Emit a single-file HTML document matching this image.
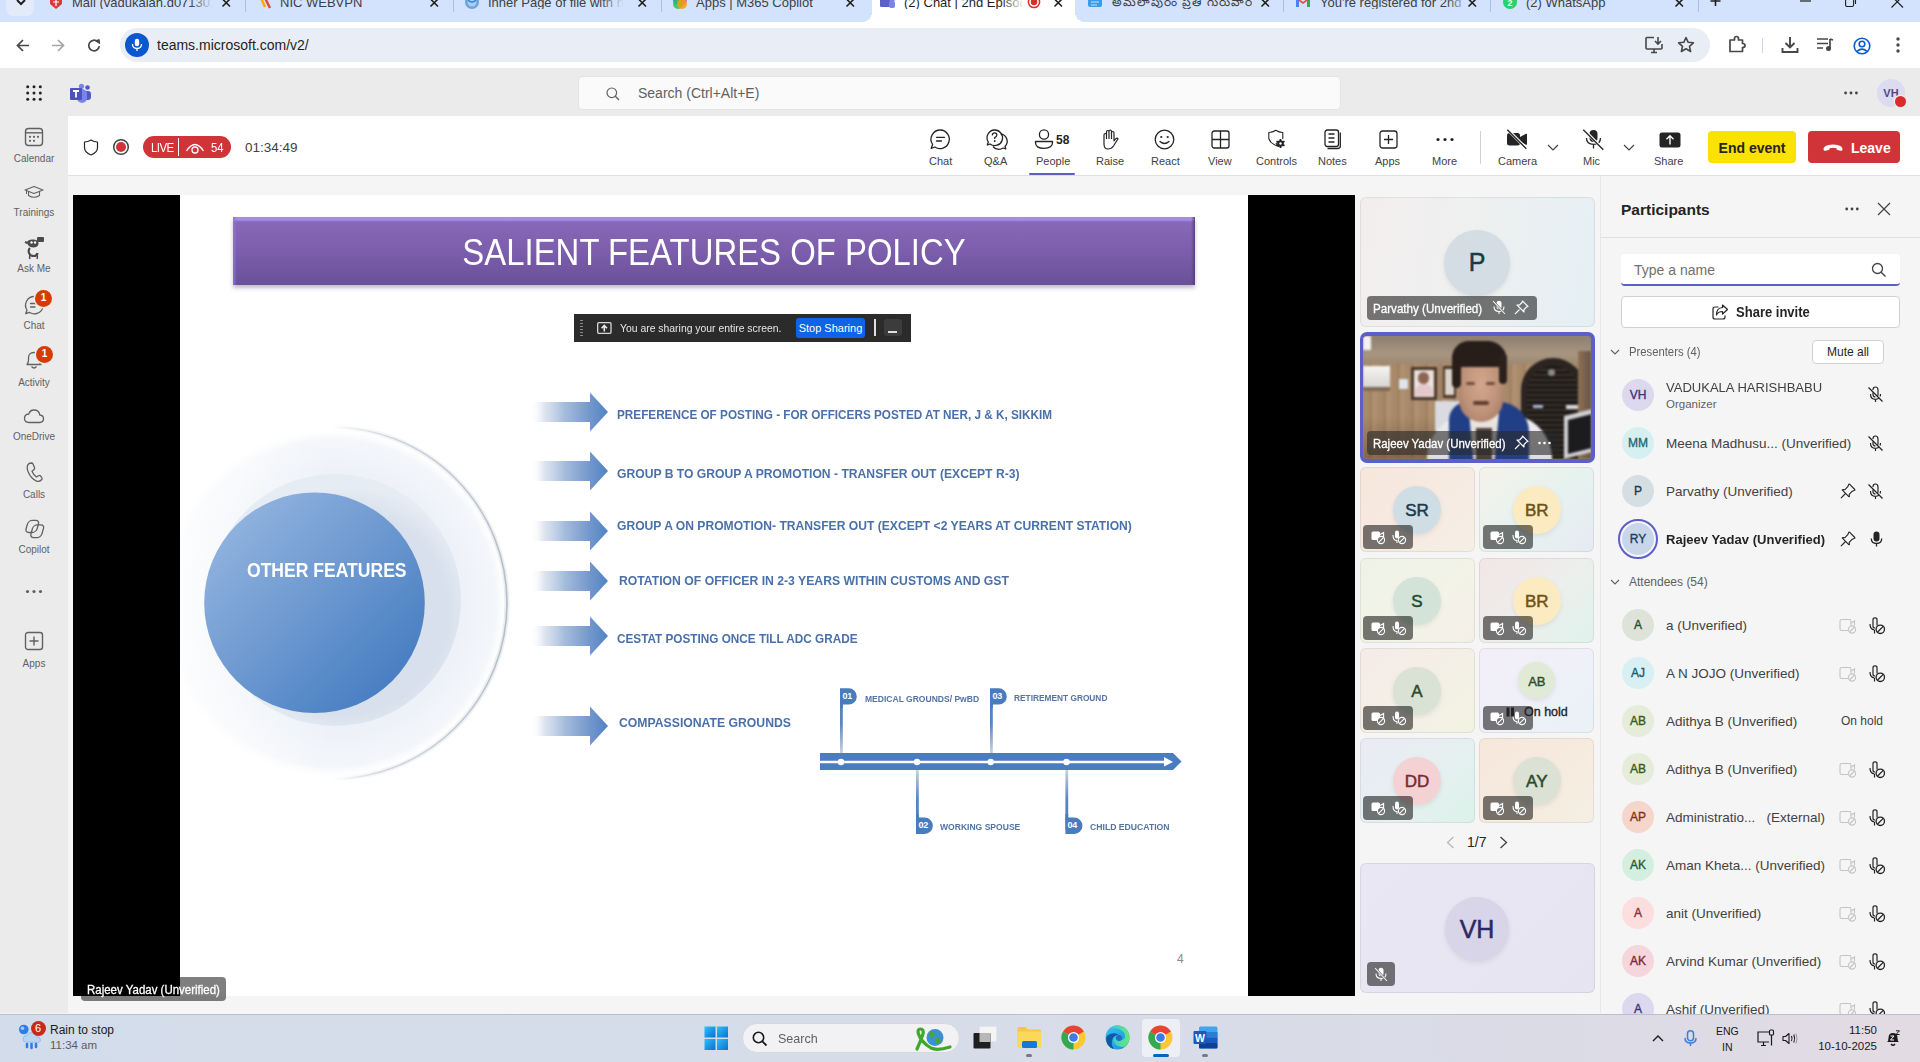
<!DOCTYPE html>
<html><head><meta charset="utf-8">
<style>
*{margin:0;padding:0;box-sizing:border-box}
html,body{width:1920px;height:1062px;overflow:hidden;background:#f5f5f5;font-family:"Liberation Sans",sans-serif;color:#242424}
.a{position:absolute}
.t{position:absolute;white-space:nowrap;line-height:1}
svg{position:absolute;overflow:visible}
/* chrome */
#tabbar{left:0;top:0;width:1920px;height:22px;background:#d3e3fd}
#addr{left:0;top:22px;width:1920px;height:46px;background:#fff}
#omni{left:120px;top:28px;width:1590px;height:34px;border-radius:17px;background:#e9eef6}
#thead{left:0;top:68px;width:1920px;height:48px;background:#ebebeb}
#rail{left:0;top:116px;width:68px;height:897px;background:#ebebeb}
#mtool{left:68px;top:116px;width:1852px;height:60px;background:#fff;border-bottom:1px solid #e0e0e0}
#content{left:68px;top:176px;width:1532px;height:837px;background:#f5f5f5}
#ppanel{left:1600px;top:176px;width:320px;height:837px;background:#f5f5f5;border-left:1px solid #e0e0e0}
#taskbar{left:0;top:1014px;width:1920px;height:48px;background:linear-gradient(90deg,#d3dcea 0%,#d6dde9 50%,#dcdbe6 85%,#e3dbe3 100%);border-top:1px solid #b9c0cc}
.tab{position:absolute;top:0;height:22px}
.tabtxt{position:absolute;top:-4px;font-size:13px;color:#1f1f1f;white-space:nowrap;line-height:13px}
.tx{position:absolute;top:-3px;font-size:14px;color:#1f1f1f;line-height:14px}
.sep{position:absolute;top:0;width:1px;height:12px;background:#a8c0e8}
.slt{font-size:13px;font-weight:bold;color:#4a70aa}
.tln{font-size:9px;font-weight:bold;color:#fff;letter-spacing:-.3px}
.tll{font-size:9.5px;font-weight:bold;color:#5573a3;transform-origin:0 0}
.tile{border-radius:6px;box-shadow:inset 0 0 0 1px rgba(0,0,0,.07)}
.pn{font-size:13.5px;color:#424242}
</style></head><body>
<div id="tabbar" class="a"></div>
<div id="addr" class="a"></div>
<div id="omni" class="a"></div>

<!-- TABS -->
<div class="a" style="left:6px;top:-10px;width:28px;height:26px;border-radius:7px;background:#e3ebfa"></div>
<svg style="left:15px;top:0" width="12" height="6"><path d="M2 0 L6 4 L10 0" stroke="#1f1f1f" stroke-width="2" fill="none"/></svg>
<!-- tab1 -->
<svg style="left:49px;top:-4px" width="14" height="14"><path d="M1 0 H13 V8 L7 13 L1 8 Z" fill="#d93b3b"/><path d="M4 3 h6 M7 3 v7 M4 6h6" stroke="#fff" stroke-width="1.2"/></svg>
<div class="tabtxt" style="left:72px;width:140px;overflow:hidden;color:#3c4043">Mail (vadukalah.d071301(</div>
<div class="a" style="left:190px;top:0;width:24px;height:12px;background:linear-gradient(90deg,rgba(211,227,253,0),#d3e3fd)"></div>
<svg style="left:222px;top:-1px" width="9" height="8"><path d="M0.5 0 L8 7.5 M8 0 L0.5 7.5" stroke="#1f1f1f" stroke-width="1.6"/></svg>
<div class="sep" style="left:245px"></div>
<!-- tab2 -->
<svg style="left:257px;top:-4px" width="16" height="14"><path d="M3 0 L8 11" stroke="#f9ab00" stroke-width="2.5"/><path d="M7 0 L13 12" stroke="#e8453c" stroke-width="2.5"/></svg>
<div class="tabtxt" style="left:280px;color:#3c4043">NIC WEBVPN</div>
<svg style="left:430px;top:-1px" width="9" height="8"><path d="M0.5 0 L8 7.5 M8 0 L0.5 7.5" stroke="#1f1f1f" stroke-width="1.6"/></svg>
<div class="sep" style="left:453px"></div>
<!-- tab3 -->
<svg style="left:464px;top:-6px" width="16" height="16"><circle cx="8" cy="8" r="7" fill="#6ba4e0"/><circle cx="8" cy="8" r="4.5" fill="#a8cdf3"/><path d="M4 6 Q8 10 12 6" stroke="#3a7cc8" stroke-width="1.3" fill="none"/></svg>
<div class="tabtxt" style="left:488px;width:136px;overflow:hidden;color:#3c4043">Inner Page of file with nur</div>
<div class="a" style="left:600px;top:0;width:24px;height:12px;background:linear-gradient(90deg,rgba(211,227,253,0),#d3e3fd)"></div>
<svg style="left:638px;top:-1px" width="9" height="8"><path d="M0.5 0 L8 7.5 M8 0 L0.5 7.5" stroke="#1f1f1f" stroke-width="1.6"/></svg>
<div class="sep" style="left:661px"></div>
<!-- tab4 -->
<svg style="left:672px;top:-6px" width="16" height="16"><circle cx="6" cy="6" r="5" fill="#3b82f6"/><circle cx="10" cy="6" r="5" fill="#e04ad6" opacity=".85"/><circle cx="6" cy="10" r="5" fill="#22c55e" opacity=".85"/><circle cx="10" cy="10" r="5" fill="#f59e0b" opacity=".85"/></svg>
<div class="tabtxt" style="left:696px;color:#3c4043">Apps | M365 Copilot</div>
<svg style="left:846px;top:-1px" width="9" height="8"><path d="M0.5 0 L8 7.5 M8 0 L0.5 7.5" stroke="#1f1f1f" stroke-width="1.6"/></svg>
<!-- active tab -->
<div class="a" style="left:872px;top:-10px;width:203px;height:32px;background:#fff;border-radius:10px 10px 0 0"></div>
<div class="a" style="left:862px;top:12px;width:10px;height:10px;background:radial-gradient(circle at 0 0,#d3e3fd 10px,#fff 10px)"></div>
<div class="a" style="left:1075px;top:12px;width:10px;height:10px;background:radial-gradient(circle at 100% 0,#d3e3fd 10px,#fff 10px)"></div>
<svg style="left:880px;top:-5px" width="16" height="14"><rect x="0" y="3" width="10" height="9" rx="1.5" fill="#5b5fc7"/><circle cx="12" cy="4" r="3" fill="#7b83eb"/><rect x="9" y="6" width="6" height="7" rx="2" fill="#7b83eb"/></svg>
<div class="tabtxt" style="left:904px;width:118px;overflow:hidden">(2) Chat | 2nd Episode</div>
<div class="a" style="left:1002px;top:0;width:22px;height:12px;background:linear-gradient(90deg,rgba(255,255,255,0),#fff)"></div>
<svg style="left:1027px;top:-5px" width="14" height="14"><circle cx="7" cy="7" r="5.6" stroke="#d93025" stroke-width="1.5" fill="none"/><circle cx="7" cy="7" r="3.2" fill="#d93025"/></svg>
<svg style="left:1054px;top:-1px" width="9" height="8"><path d="M0.5 0 L8 7.5 M8 0 L0.5 7.5" stroke="#1f1f1f" stroke-width="1.6"/></svg>
<!-- tab6 -->
<svg style="left:1088px;top:-5px" width="16" height="14"><rect x="0" y="1" width="14" height="11" rx="2" fill="#3c9be8"/><path d="M3 4h8M3 7h8M3 10h6" stroke="#bfe3ff" stroke-width="1.2"/></svg>
<div class="tabtxt" style="left:1112px;width:140px;overflow:hidden;color:#3c4043;font-size:12px;letter-spacing:1px">&#x0C05;&#x0C2E;&#x0C32;&#x0C3E;&#x0C2A;&#x0C41;&#x0C30;&#x0C02; &#x0C2A;&#x0C4D;&#x0C30;&#x0C24;&#x0C3F; &#x0C17;&#x0C41;&#x0C30;&#x0C41;&#x0C35;&#x0C3E;&#x0C30;&#x0C02;</div>
<div class="tabtxt" style="left:1112px;width:142px;overflow:hidden;color:#5f6368;font-size:13px">&#8203;</div>
<svg style="left:1261px;top:-1px" width="9" height="8"><path d="M0.5 0 L8 7.5 M8 0 L0.5 7.5" stroke="#1f1f1f" stroke-width="1.6"/></svg>
<div class="sep" style="left:1283px"></div>
<!-- tab7 -->
<svg style="left:1295px;top:-5px" width="16" height="13"><path d="M1 2 V12 H4 V6 L8 9 L12 6 V12 H15 V2 L8 7 Z" fill="#ea4335"/><path d="M1 2 V12 H4 V6 Z" fill="#4285f4"/><path d="M15 2 V12 H12 V6 Z" fill="#34a853"/></svg>
<div class="tabtxt" style="left:1320px;width:148px;overflow:hidden;color:#3c4043">You're registered for 2nd</div>
<div class="a" style="left:1446px;top:0;width:24px;height:12px;background:linear-gradient(90deg,rgba(211,227,253,0),#d3e3fd)"></div>
<svg style="left:1468px;top:-1px" width="9" height="8"><path d="M0.5 0 L8 7.5 M8 0 L0.5 7.5" stroke="#1f1f1f" stroke-width="1.6"/></svg>
<div class="sep" style="left:1490px"></div>
<!-- tab8 -->
<svg style="left:1502px;top:-6px" width="16" height="16"><circle cx="8" cy="8" r="7" fill="#25d366"/><text x="8" y="11.5" font-size="9" font-family="Liberation Sans" font-weight="bold" fill="#fff" text-anchor="middle">2</text></svg>
<div class="tabtxt" style="left:1526px;color:#3c4043">(2) WhatsApp</div>
<svg style="left:1675px;top:-1px" width="9" height="8"><path d="M0.5 0 L8 7.5 M8 0 L0.5 7.5" stroke="#1f1f1f" stroke-width="1.6"/></svg>
<div class="sep" style="left:1698px"></div>
<svg style="left:1710px;top:-3px" width="12" height="10"><path d="M5.5 0 V9 M0.5 4 H10.5" stroke="#1f1f1f" stroke-width="1.6"/></svg>
<svg style="left:1800px;top:0" width="11" height="3"><path d="M0 1 H11" stroke="#1f1f1f" stroke-width="1.2"/></svg>
<svg style="left:1845px;top:-4px" width="12" height="12"><rect x="0.6" y="2" width="8" height="8.5" rx="1.5" stroke="#1f1f1f" stroke-width="1.1" fill="none"/><path d="M3 0.6 H8.5 Q10.5 .6 10.5 2.6 V8" stroke="#1f1f1f" stroke-width="1.1" fill="none"/></svg>
<svg style="left:1891px;top:-4px" width="13" height="12"><path d="M0.5 0 L12 11.5 M12 0 L0.5 11.5" stroke="#1f1f1f" stroke-width="1.2"/></svg>

<!-- ADDRESS BAR -->
<svg style="left:16px;top:39px" width="14" height="13"><path d="M13 6.5 H2 M7 1 L1.5 6.5 L7 12" stroke="#474747" stroke-width="1.7" fill="none"/></svg>
<svg style="left:51px;top:39px" width="14" height="13"><path d="M1 6.5 H12 M7 1 L12.5 6.5 L7 12" stroke="#a6a6a6" stroke-width="1.7" fill="none"/></svg>
<svg style="left:87px;top:38px" width="15" height="15"><path d="M12.3 8.2 A5.3 5.3 0 1 1 10.6 3.6" stroke="#474747" stroke-width="1.7" fill="none"/><path d="M8.3 2.8 L12.2 1.6 L12.6 5.6 Z" fill="#474747" stroke="#474747" stroke-width="1"/></svg>
<div class="a" style="left:125px;top:33px;width:24px;height:24px;border-radius:12px;background:#0b57d0"></div>
<svg style="left:131px;top:38px" width="12" height="14"><rect x="3.8" y="0.8" width="4.4" height="7.4" rx="2.2" fill="#fff"/><path d="M1.5 6 Q1.5 10.5 6 10.5 Q10.5 10.5 10.5 6 M6 10.5 V13" stroke="#fff" stroke-width="1.3" fill="none"/></svg>
<div class="t" style="left:157px;top:38px;font-size:14px;color:#1f1f1f">teams.microsoft.com/v2/</div>
<svg style="left:1645px;top:36px" width="20" height="18"><path d="M9 1.5 H2 Q1 1.5 1 2.5 V12 Q1 13 2 13 H16 Q17 13 17 12 V8" stroke="#474747" stroke-width="1.6" fill="none"/><path d="M6 16.5 H12 M9 13 V16.5" stroke="#474747" stroke-width="1.6"/><path d="M13 1 V8 M10 5 L13 8 L16 5" stroke="#474747" stroke-width="1.6" fill="none"/></svg>
<svg style="left:1677px;top:36px" width="18" height="18"><path d="M9 1.5 L11.2 6.3 L16.4 6.8 L12.5 10.3 L13.6 15.5 L9 12.8 L4.4 15.5 L5.5 10.3 L1.6 6.8 L6.8 6.3 Z" stroke="#474747" stroke-width="1.6" fill="none" stroke-linejoin="round"/></svg>
<svg style="left:1728px;top:35px" width="19" height="19"><path d="M2 5 H6.5 V3.5 Q6.5 1.5 8.5 1.5 Q10.5 1.5 10.5 3.5 V5 H14.5 V8.5 Q17 8.5 17 10.5 Q17 12.5 14.5 12.5 V16.5 H2 Z" stroke="#474747" stroke-width="1.7" fill="none" stroke-linejoin="round"/></svg>
<div class="a" style="left:1762px;top:38px;width:1px;height:15px;background:#c7d7f0"></div>
<svg style="left:1780px;top:35px" width="20" height="20"><path d="M10 2 V12 M5.5 8 L10 12.5 L14.5 8" stroke="#474747" stroke-width="1.9" fill="none"/><path d="M2.5 13 V17 H17.5 V13" stroke="#474747" stroke-width="1.9" fill="none"/></svg>
<svg style="left:1816px;top:37px" width="20" height="16"><path d="M1 2 H12 M1 6.5 H12 M1 11 H7" stroke="#474747" stroke-width="1.7"/><path d="M14 2 V11" stroke="#474747" stroke-width="1.7"/><circle cx="12.5" cy="11.5" r="2.5" fill="#474747"/><path d="M14 2 L17 3" stroke="#474747" stroke-width="1.7"/></svg>
<svg style="left:1853px;top:37px" width="18" height="18"><circle cx="9" cy="9" r="7.8" stroke="#0b57d0" stroke-width="1.6" fill="none"/><circle cx="9" cy="7" r="2.8" stroke="#0b57d0" stroke-width="1.6" fill="none"/><path d="M4 14.3 Q9 10 14 14.3" stroke="#0b57d0" stroke-width="1.6" fill="none"/></svg>
<svg style="left:1896px;top:37px" width="4" height="16"><circle cx="2" cy="2" r="1.7" fill="#474747"/><circle cx="2" cy="8" r="1.7" fill="#474747"/><circle cx="2" cy="14" r="1.7" fill="#474747"/></svg>

<div id="thead" class="a"></div>
<div id="rail" class="a"></div>
<div id="mtool" class="a"></div>

<!-- TEAMS HEADER -->
<svg style="left:26px;top:85px" width="16" height="16"><g fill="#242424"><circle cx="1.7" cy="1.7" r="1.5"/><circle cx="8" cy="1.7" r="1.5"/><circle cx="14.3" cy="1.7" r="1.5"/><circle cx="1.7" cy="8" r="1.5"/><circle cx="8" cy="8" r="1.5"/><circle cx="14.3" cy="8" r="1.5"/><circle cx="1.7" cy="14.3" r="1.5"/><circle cx="8" cy="14.3" r="1.5"/><circle cx="14.3" cy="14.3" r="1.5"/></g></svg>
<svg style="left:69px;top:83px" width="23" height="21"><circle cx="12.5" cy="3.3" r="2.6" fill="#7b83eb"/><circle cx="18.5" cy="4.5" r="2.3" fill="#5059c9"/><rect x="14.5" y="8" width="7.5" height="9" rx="3" fill="#5059c9"/><rect x="8" y="6" width="10" height="14" rx="5" fill="#7b83eb"/><rect x="1" y="5" width="12" height="12" rx="1" fill="#4b53bc"/><path d="M4 8 H10 M7 8 V14.5" stroke="#fff" stroke-width="1.8"/></svg>
<div class="a" style="left:579px;top:77px;width:761px;height:32px;border-radius:4px;background:#fafafa;box-shadow:0 0 0 1px #e3e3e3"></div>
<svg style="left:606px;top:87px" width="14" height="14"><circle cx="5.8" cy="5.8" r="4.8" stroke="#616161" stroke-width="1.2" fill="none"/><path d="M9.3 9.3 L13 13" stroke="#616161" stroke-width="1.3"/></svg>
<div class="t" style="left:638px;top:86px;font-size:14px;color:#616161">Search (Ctrl+Alt+E)</div>
<svg style="left:1844px;top:91px" width="14" height="4"><g fill="#424242"><circle cx="1.6" cy="2" r="1.4"/><circle cx="7" cy="2" r="1.4"/><circle cx="12.4" cy="2" r="1.4"/></g></svg>
<div class="a" style="left:1877px;top:79px;width:28px;height:28px;border-radius:14px;background:#dcdbf0"></div>
<div class="t" style="left:1877px;top:88px;width:28px;text-align:center;font-size:11px;font-weight:bold;color:#4f4a7a">VH</div>
<div class="a" style="left:1895px;top:96px;width:11px;height:11px;border-radius:6px;background:#d92c2c;box-shadow:0 0 0 1.5px #ebebeb"></div>

<!-- MEETING TOOLBAR -->
<svg style="left:83px;top:139px" width="16" height="17"><path d="M8 1 Q11 3 14.5 3 V8.5 Q14.5 13.5 8 16 Q1.5 13.5 1.5 8.5 V3 Q5 3 8 1 Z" stroke="#242424" stroke-width="1.2" fill="none" stroke-linejoin="round"/></svg>
<svg style="left:112px;top:138px" width="18" height="18"><circle cx="9" cy="9" r="7.3" stroke="#424242" stroke-width="1.5" fill="none"/><circle cx="9" cy="9" r="5" fill="#d13438"/></svg>
<div class="a" style="left:143px;top:136px;width:88px;height:22px;border-radius:11px;background:#d13438"></div>
<div class="t" style="left:151px;top:142px;font-size:12.5px;color:#fff;letter-spacing:-0.6px;transform:scaleX(.92);transform-origin:0 0">LIVE</div>
<div class="a" style="left:178px;top:138px;width:1px;height:18px;background:#fff"></div>
<svg style="left:185px;top:141px" width="20" height="14"><path d="M1.5 10 Q10 -3 18.5 10" stroke="#fff" stroke-width="1.3" fill="none"/><circle cx="10" cy="9" r="3" stroke="#fff" stroke-width="1.3" fill="none"/></svg>
<div class="t" style="left:211px;top:142px;font-size:12.5px;color:#fff;transform:scaleX(.9);transform-origin:0 0">54</div>
<div class="t" style="left:245px;top:141px;font-size:13.5px;color:#424242">01:34:49</div>

<!-- toolbar buttons -->
<svg style="left:930px;top:129px" width="21" height="21"><path d="M10.5 1 A9.3 9.3 0 1 1 4.8 18 L1.2 19.5 L2.6 15.5 A9.3 9.3 0 0 1 10.5 1 Z" stroke="#242424" stroke-width="1.3" fill="none" stroke-linejoin="round"/><path d="M6.5 8.3 H14.5 M6.5 12 H11.5" stroke="#242424" stroke-width="1.3" stroke-linecap="round"/></svg>
<svg style="left:986px;top:129px" width="22" height="21"><path d="M8.5 1 A7.8 7.8 0 1 1 4 15 L1.3 16 L2.3 13 A7.8 7.8 0 0 1 8.5 1 Z" stroke="#242424" stroke-width="1.3" fill="none" stroke-linejoin="round"/><path d="M14.5 4.8 A7.5 7.5 0 0 1 19 17.5 L19.8 20 L17 19 A7.5 7.5 0 0 1 7 17.5" stroke="#242424" stroke-width="1.3" fill="none" stroke-linejoin="round"/><path d="M6.2 6.4 Q6.4 3.8 8.6 3.8 Q10.9 3.8 10.9 6 Q10.9 7.6 8.7 8.6 V10" stroke="#242424" stroke-width="1.2" fill="none"/><circle cx="8.7" cy="12" r=".9" fill="#242424"/></svg>
<svg style="left:1034px;top:129px" width="20" height="21"><circle cx="10" cy="5.5" r="4.6" stroke="#242424" stroke-width="1.3" fill="none"/><path d="M1.5 12.5 H18.5 V13.5 Q18.5 19.3 10 19.3 Q1.5 19.3 1.5 13.5 Z" stroke="#242424" stroke-width="1.3" fill="none" stroke-linejoin="round"/></svg>
<div class="t" style="left:1056px;top:134px;font-size:12px;font-weight:bold;color:#242424">58</div>
<svg style="left:1100px;top:129px" width="19" height="21"><path d="M4 15 V6 Q4 4.5 5.3 4.5 Q6.5 4.5 6.5 6 V10 M6.5 10 V3 Q6.5 1.5 7.8 1.5 Q9 1.5 9 3 V10 M9 10 V2.5 Q9 1 10.3 1 Q11.5 1 11.5 2.5 V10 M11.5 10 V4 Q11.5 2.5 12.8 2.5 Q14 2.5 14 4 V12 L16 9.5 Q17.3 8.5 18 9.8 L13.5 17 Q11.5 20 8 20 Q4 20 4 15" stroke="#242424" stroke-width="1.2" fill="none" stroke-linejoin="round"/></svg>
<svg style="left:1154px;top:129px" width="21" height="21"><circle cx="10.5" cy="10.5" r="9.3" stroke="#242424" stroke-width="1.3" fill="none"/><circle cx="7.3" cy="8" r="1.1" fill="#242424"/><circle cx="13.7" cy="8" r="1.1" fill="#242424"/><path d="M6 12.5 Q10.5 16.5 15 12.5" stroke="#242424" stroke-width="1.3" fill="none" stroke-linecap="round"/></svg>
<svg style="left:1211px;top:130px" width="19" height="19"><rect x="1" y="1" width="17" height="17" rx="2.2" stroke="#242424" stroke-width="1.3" fill="none"/><path d="M9.5 1 V18 M1 9.5 H18" stroke="#242424" stroke-width="1.3"/></svg>
<svg style="left:1267px;top:129px" width="20" height="20"><path d="M9 13.8 Q9.8 16.5 12 17.5 Q3.5 15 1.8 9.5 V3.5 Q6 3.2 8.8 1.2 Q11.6 3.2 15.8 3.5 V10" stroke="#242424" stroke-width="1.1" fill="none" stroke-linejoin="round"/><circle cx="13.5" cy="14.5" r="3.3" fill="#242424"/><g stroke="#242424" stroke-width="1.8"><path d="M13.5 10 V19 M9.5 12.2 L17.5 16.8 M9.5 16.8 L17.5 12.2"/></g><circle cx="13.5" cy="14.5" r="1.2" fill="#fff"/></svg>
<svg style="left:1324px;top:129px" width="19" height="21"><rect x="1" y="1" width="13.5" height="16.5" rx="2.2" stroke="#242424" stroke-width="1.3" fill="none"/><path d="M4.5 5 H10.5 M4.5 9 H10.5 M4.5 13 H10.5" stroke="#242424" stroke-width="1.3"/><path d="M16.3 3.5 V17 Q16.3 19.5 13.8 19.5 H3.5" stroke="#242424" stroke-width="1.3" fill="none"/></svg>
<svg style="left:1379px;top:130px" width="19" height="19"><rect x="1" y="1" width="17" height="17" rx="2.5" stroke="#242424" stroke-width="1.3" fill="none"/><path d="M9.5 5 V14 M5 9.5 H14" stroke="#242424" stroke-width="1.3"/></svg>
<svg style="left:1436px;top:137px" width="18" height="5"><g fill="#242424"><circle cx="2" cy="2.5" r="1.6"/><circle cx="9" cy="2.5" r="1.6"/><circle cx="16" cy="2.5" r="1.6"/></g></svg>
<div class="a" style="left:1480px;top:131px;width:1px;height:33px;background:#d1d1d1"></div>
<svg style="left:1506px;top:129px" width="23" height="21"><rect x="1" y="4" width="13" height="12.5" rx="2.5" fill="#242424"/><path d="M14 8 L20 4.8 Q21 4.3 21 5.5 V15 Q21 16.2 20 15.7 L14 12.5 Z" fill="#242424"/><path d="M1.5 0.5 L20.5 19.5" stroke="#fff" stroke-width="3"/><path d="M1.3 0.8 L20.3 19.8" stroke="#242424" stroke-width="1.3"/></svg>
<svg style="left:1547px;top:144px" width="12" height="7"><path d="M1 1 L6 6 L11 1" stroke="#424242" stroke-width="1.2" fill="none"/></svg>
<svg style="left:1582px;top:129px" width="23" height="21"><rect x="7.5" y="1" width="8" height="12" rx="4" fill="#242424"/><path d="M4.5 9 Q4.5 15.3 11.5 15.3 Q18.5 15.3 18.5 9 M11.5 15.3 V19.5" stroke="#242424" stroke-width="1.3" fill="none"/><path d="M1.5 0.5 L21.5 20.5" stroke="#fff" stroke-width="3"/><path d="M1.3 0.8 L21.3 20.8" stroke="#242424" stroke-width="1.3"/></svg>
<svg style="left:1623px;top:144px" width="12" height="7"><path d="M1 1 L6 6 L11 1" stroke="#424242" stroke-width="1.2" fill="none"/></svg>
<svg style="left:1659px;top:132px" width="22" height="16"><rect x="0.5" y="0.5" width="21" height="15" rx="2.5" fill="#242424"/><path d="M11 12.5 V4 M7.5 7.3 L11 3.8 L14.5 7.3" stroke="#fff" stroke-width="1.4" fill="none"/></svg>
<div class="t" style="left:929px;top:156px;font-size:11px;color:#424242">Chat</div>
<div class="t" style="left:984px;top:156px;font-size:11px;color:#424242">Q&amp;A</div>
<div class="t" style="left:1036px;top:156px;font-size:11px;color:#424242">People</div>
<div class="t" style="left:1096px;top:156px;font-size:11px;color:#424242">Raise</div>
<div class="t" style="left:1151px;top:156px;font-size:11px;color:#424242">React</div>
<div class="t" style="left:1208px;top:156px;font-size:11px;color:#424242">View</div>
<div class="t" style="left:1256px;top:156px;font-size:11px;color:#424242">Controls</div>
<div class="t" style="left:1318px;top:156px;font-size:11px;color:#424242">Notes</div>
<div class="t" style="left:1375px;top:156px;font-size:11px;color:#424242">Apps</div>
<div class="t" style="left:1432px;top:156px;font-size:11px;color:#424242">More</div>
<div class="t" style="left:1498px;top:156px;font-size:11px;color:#424242">Camera</div>
<div class="t" style="left:1583px;top:156px;font-size:11px;color:#424242">Mic</div>
<div class="t" style="left:1654px;top:156px;font-size:11px;color:#424242">Share</div>
<div class="a" style="left:1029px;top:173px;width:46px;height:2px;background:#5b5fc7;border-radius:1px"></div>
<div class="a" style="left:1708px;top:131px;width:88px;height:32px;border-radius:4px;background:#fbe202"></div>
<div class="t" style="left:1708px;top:141px;width:88px;text-align:center;font-size:14px;font-weight:bold;color:#242424">End event</div>
<div class="a" style="left:1808px;top:131px;width:92px;height:32px;border-radius:4px;background:#d13438"></div>
<svg style="left:1822px;top:142px" width="22" height="10"><path d="M1.5 7.5 Q1 3 11 2.5 Q21 3 20.5 7.5 Q20.3 9 18.5 8.7 L15.5 8 Q14.3 7.6 14.5 6.2 Q11 5.2 7.5 6.2 Q7.7 7.6 6.5 8 L3.5 8.7 Q1.7 9 1.5 7.5 Z" fill="#fff"/></svg>
<div class="t" style="left:1851px;top:141px;font-size:14px;font-weight:bold;color:#fff">Leave</div>


<!-- RAIL -->
<svg style="left:24px;top:127px" width="20" height="20"><rect x="1.5" y="1.5" width="17" height="17" rx="3" stroke="#616161" stroke-width="1.4" fill="none"/><path d="M1.5 5.8 H18.5" stroke="#616161" stroke-width="1.4"/><g fill="#616161"><circle cx="6" cy="9.8" r="1.1"/><circle cx="10" cy="9.8" r="1.1"/><circle cx="14" cy="9.8" r="1.1"/><circle cx="6" cy="13.8" r="1.1"/><circle cx="10" cy="13.8" r="1.1"/></g></svg>
<div class="t" style="left:0;top:154px;width:68px;text-align:center;font-size:10px;color:#616161">Calendar</div>
<svg style="left:24px;top:185px" width="20" height="14"><path d="M1 5 L10 1.5 L19 5 L10 8.5 Z" stroke="#616161" stroke-width="1.1" fill="none" stroke-linejoin="round"/><path d="M4.5 6.5 V10.5 Q10 14 15.5 10.5 V6.5" stroke="#616161" stroke-width="1.1" fill="none"/><path d="M2.5 5.5 V9" stroke="#616161" stroke-width="1"/></svg>
<div class="t" style="left:0;top:208px;width:68px;text-align:center;font-size:10px;color:#616161">Trainings</div>
<svg style="left:22px;top:236px" width="24" height="24"><path d="M5 7 Q5 3 12 3.5 Q17 4 16.5 8 Q16 11 12 11.5 Q6.5 11.5 5 7 Z" fill="#4a4a4a"/><rect x="15" y="1" width="7" height="5" rx="1" fill="#4a4a4a"/><path d="M3 6 L5.5 7" stroke="#4a4a4a" stroke-width="2"/><circle cx="9.5" cy="6.5" r="1.2" fill="#fff"/><circle cx="13" cy="6.5" r="1.2" fill="#fff"/><path d="M8 12 Q6 14 7 17 Q8 20 12 20 Q15 20 15.5 17" stroke="#4a4a4a" stroke-width="2.2" fill="none"/><path d="M8.5 18 Q7 21 8 23 M14.5 18 Q16 21 15 23" stroke="#4a4a4a" stroke-width="1.5" fill="none"/></svg>
<div class="t" style="left:0;top:264px;width:68px;text-align:center;font-size:10px;color:#616161">Ask Me</div>
<svg style="left:24px;top:295px" width="21" height="21"><path d="M10.5 1.5 A8.7 8.7 0 1 1 5.4 17.3 L1.7 18.7 L3 15 A8.7 8.7 0 0 1 10.5 1.5 Z" stroke="#616161" stroke-width="1.3" fill="none" stroke-linejoin="round"/><path d="M6.5 8.5 H13.5 M6.5 12 H11" stroke="#616161" stroke-width="1.3" stroke-linecap="round"/></svg>
<div class="a" style="left:35px;top:290px;width:17px;height:17px;border-radius:9px;background:#d83b01;box-shadow:0 0 0 1.5px #ebebeb"></div>
<div class="t" style="left:35px;top:293px;width:17px;text-align:center;font-size:10px;font-weight:bold;color:#fff">1</div>
<div class="t" style="left:0;top:321px;width:68px;text-align:center;font-size:10px;color:#616161">Chat</div>
<svg style="left:24px;top:350px" width="20" height="21"><path d="M3 14.5 Q4.5 13 4.5 10 V8 Q4.5 2.5 10 2.5 Q15.5 2.5 15.5 8 V10 Q15.5 13 17 14.5 Z" stroke="#616161" stroke-width="1.3" fill="none" stroke-linejoin="round"/><path d="M7.5 16.5 Q10 19.5 12.5 16.5" stroke="#616161" stroke-width="1.3" fill="none"/></svg>
<div class="a" style="left:36px;top:346px;width:17px;height:17px;border-radius:9px;background:#d83b01;box-shadow:0 0 0 1.5px #ebebeb"></div>
<div class="t" style="left:36px;top:349px;width:17px;text-align:center;font-size:10px;font-weight:bold;color:#fff">1</div>
<div class="t" style="left:0;top:378px;width:68px;text-align:center;font-size:10px;color:#616161">Activity</div>
<svg style="left:23px;top:408px" width="22" height="16"><path d="M6 14.5 H16.5 Q20.5 14.5 20.5 10.8 Q20.5 7.3 16.8 7 Q16 2 11 2 Q7 2 5.8 6 Q1.5 6.3 1.5 10.3 Q1.5 14.5 6 14.5 Z" stroke="#616161" stroke-width="1.3" fill="none"/></svg>
<div class="t" style="left:0;top:432px;width:68px;text-align:center;font-size:10px;color:#616161">OneDrive</div>
<svg style="left:25px;top:462px" width="18" height="21"><path d="M4 1.5 L6.5 1 Q7.5 1 8 2 L9.5 5.5 Q10 6.8 8.8 7.8 L7 9.2 Q8.5 13 11.5 15 L13.5 13.7 Q14.5 13 15.5 13.8 L17 16 Q17.5 17 16.5 17.8 Q14.5 20 12 19.3 Q6 17 3 9.5 Q1 4 4 1.5 Z" stroke="#616161" stroke-width="1.3" fill="none" stroke-linejoin="round"/></svg>
<div class="t" style="left:0;top:490px;width:68px;text-align:center;font-size:10px;color:#616161">Calls</div>
<svg style="left:23px;top:518px" width="22" height="22"><g stroke="#616161" stroke-width="1.35" fill="none"><rect x="3.8" y="2.3" width="11" height="12.2" rx="3.8" transform="skewX(-16) translate(2.4 0)"/><rect x="8.8" y="6.8" width="11" height="12.8" rx="3.8" transform="skewX(-16) translate(3.7 0)"/></g></svg>
<div class="t" style="left:0;top:545px;width:68px;text-align:center;font-size:10px;color:#616161">Copilot</div>
<svg style="left:25px;top:589px" width="18" height="5"><g fill="#616161"><circle cx="2.5" cy="2.5" r="1.6"/><circle cx="9" cy="2.5" r="1.6"/><circle cx="15.5" cy="2.5" r="1.6"/></g></svg>
<svg style="left:24px;top:631px" width="20" height="20"><rect x="1.5" y="1.5" width="17" height="17" rx="2.5" stroke="#616161" stroke-width="1.4" fill="none"/><path d="M10 5.5 V14.5 M5.5 10 H14.5" stroke="#616161" stroke-width="1.4"/></svg>
<div class="t" style="left:0;top:659px;width:68px;text-align:center;font-size:10px;color:#616161">Apps</div>

<div id="content" class="a"></div>
<div id="ppanel" class="a"></div>

<!-- STAGE -->
<div class="a" style="left:73px;top:195px;width:1282px;height:801px;background:#000"></div>
<div class="a" style="left:180px;top:195px;width:1068px;height:801px;background:#fff;overflow:hidden">
 <div class="a" style="left:53px;top:22px;width:962px;height:68px;background:linear-gradient(180deg,#a58ee0 0,#a58ee0 3px,#8868b8 5px,#7d5fae 45%,#6a5099 100%);box-shadow:0 3px 4px rgba(80,60,120,.35)"></div>
 <div class="a" style="left:53px;top:22px;width:4px;height:68px;background:linear-gradient(90deg,rgba(140,120,210,.9),rgba(120,95,180,0))"></div>
 <div class="a" style="left:1011px;top:22px;width:4px;height:68px;background:linear-gradient(90deg,rgba(100,75,150,0),rgba(85,60,130,.9))"></div>
 <div class="t" id="title" style="left:0;top:39px;width:1068px;text-align:center;font-size:37px;color:#fff;transform:scaleX(.889)">SALIENT FEATURES OF POLICY</div>
</div>

<svg style="left:180px;top:195px;overflow:hidden" width="1068" height="801" viewBox="180 195 1068 801">
<defs>
 <linearGradient id="ag" gradientUnits="userSpaceOnUse" x1="530" y1="0" x2="608" y2="0">
  <stop offset="0" stop-color="#ffffff" stop-opacity="0"/>
  <stop offset="0.18" stop-color="#d6dfec" stop-opacity=".8"/>
  <stop offset="0.45" stop-color="#a4bbdc"/>
  <stop offset="0.75" stop-color="#7699cc"/>
  <stop offset="1" stop-color="#4f82c4"/>
 </linearGradient>
 <linearGradient id="bc" x1="0" y1="0" x2="1" y2="1">
  <stop offset="0" stop-color="#9dbbe3"/>
  <stop offset="0.5" stop-color="#6c98d0"/>
  <stop offset="1" stop-color="#3a74bd"/>
 </linearGradient>
 <radialGradient id="halo" cx="0.55" cy="0.55" r="0.5">
  <stop offset="0.8" stop-color="#d7e0ec"/>
  <stop offset="1" stop-color="#e6ecf4"/>
 </radialGradient>
 <radialGradient id="discr" cx="0.5" cy="0.5" r="0.5">
  <stop offset="0" stop-color="#eaf0f7"/>
  <stop offset="0.75" stop-color="#eef2f8"/>
  <stop offset="0.93" stop-color="#f4f6fa"/>
  <stop offset="1" stop-color="#ffffff" stop-opacity="0"/>
 </radialGradient>
 <linearGradient id="discw" gradientUnits="userSpaceOnUse" x1="157" y1="0" x2="330" y2="0">
  <stop offset="0" stop-color="#ffffff" stop-opacity=".9"/>
  <stop offset="1" stop-color="#ffffff" stop-opacity="0"/>
 </linearGradient>
 <linearGradient id="discl" gradientUnits="userSpaceOnUse" x1="175" y1="0" x2="497" y2="0">
  <stop offset="0" stop-color="#f3f6fa" stop-opacity="0"/>
  <stop offset="0.25" stop-color="#eff3f8" stop-opacity=".9"/>
  <stop offset="1" stop-color="#f2f5f9"/>
 </linearGradient>
 <linearGradient id="arcg" gradientUnits="userSpaceOnUse" x1="331" y1="0" x2="508" y2="0">
  <stop offset="0" stop-color="#c8d0d9" stop-opacity="0"/>
  <stop offset="0.3" stop-color="#c8d0d9" stop-opacity=".8"/>
  <stop offset="1" stop-color="#b4bec9"/>
 </linearGradient>
 <linearGradient id="stemU" x1="0" y1="0" x2="0" y2="1"><stop offset="0" stop-color="#4f7fc0"/><stop offset="1" stop-color="#4f7fc0" stop-opacity=".25"/></linearGradient>
 <linearGradient id="stemD" x1="0" y1="0" x2="0" y2="1"><stop offset="0" stop-color="#4f7fc0" stop-opacity=".35"/><stop offset="1" stop-color="#4f7fc0"/></linearGradient>
</defs>
<circle cx="333" cy="603" r="176" fill="url(#discr)"/><circle cx="333" cy="603" r="176" fill="url(#discw)"/>
<path d="M331 427 A176 176 0 0 1 331 779" stroke="url(#arcg)" stroke-width="5" fill="none" opacity=".25"/><path d="M331 427 A176 176 0 0 1 331 779" stroke="url(#arcg)" stroke-width="1.6" fill="none"/>
<circle cx="335" cy="600" r="126" fill="url(#halo)"/>
<circle cx="314.5" cy="602.8" r="110.3" fill="url(#bc)"/>
<path d="M530 402 H590 V392.5 L608 412 L590 431.5 V422 H530 Z" fill="url(#ag)"/>
<path d="M530 461 H590 V451.5 L608 471 L590 490.5 V481 H530 Z" fill="url(#ag)"/>
<path d="M530 521 H590 V511.5 L608 531 L590 550.5 V541 H530 Z" fill="url(#ag)"/>
<path d="M530 571 H590 V561.5 L608 581 L590 600.5 V591 H530 Z" fill="url(#ag)"/>
<path d="M530 626 H590 V616.5 L608 636 L590 655.5 V646 H530 Z" fill="url(#ag)"/>
<path d="M530 716 H590 V706.5 L608 726 L590 745.5 V736 H530 Z" fill="url(#ag)"/>
</svg>
<div class="t slt" style="left:617px;top:408px;transform:scaleX(0.903);transform-origin:0 0">PREFERENCE OF POSTING - FOR OFFICERS POSTED AT NER, J &amp; K, SIKKIM</div>
<div class="t slt" style="left:617px;top:467px;transform:scaleX(0.934);transform-origin:0 0">GROUP B TO GROUP A PROMOTION - TRANSFER OUT (EXCEPT R-3)</div>
<div class="t slt" style="left:617px;top:519px;transform:scaleX(0.932);transform-origin:0 0">GROUP A ON PROMOTION- TRANSFER OUT (EXCEPT &lt;2 YEARS AT CURRENT STATION)</div>
<div class="t slt" style="left:619px;top:573.5px;transform:scaleX(0.939);transform-origin:0 0">ROTATION OF OFFICER IN 2-3 YEARS WITHIN CUSTOMS AND GST</div>
<div class="t slt" style="left:617px;top:631.5px;transform:scaleX(0.904);transform-origin:0 0">CESTAT POSTING ONCE TILL ADC GRADE</div>
<div class="t slt" style="left:619px;top:716px;transform:scaleX(0.94);transform-origin:0 0">COMPASSIONATE GROUNDS</div>
<div class="t" id="oth" style="left:247px;top:561px;font-size:19.5px;font-weight:bold;color:#fff;transform:scaleX(.9);transform-origin:0 0">OTHER FEATURES</div>

<svg style="left:810px;top:680px" width="380" height="160" viewBox="810 680 380 160">
<defs>
 <linearGradient id="su" gradientUnits="userSpaceOnUse" x1="0" y1="688" x2="0" y2="753"><stop offset="0" stop-color="#4a7bbd"/><stop offset=".55" stop-color="#5a86c2"/><stop offset="1" stop-color="#c9d3de"/></linearGradient>
 <linearGradient id="sd" gradientUnits="userSpaceOnUse" x1="0" y1="770" x2="0" y2="834"><stop offset="0" stop-color="#c9d3de"/><stop offset=".45" stop-color="#5a86c2"/><stop offset="1" stop-color="#4a7bbd"/></linearGradient>
</defs>
<path d="M820 753 H1173 L1181.5 761.5 L1173 770 H820 Z" fill="#4a7cc0"/>
<path d="M820 762 H1166" stroke="#fff" stroke-width="2.4"/>
<path d="M1164 757 L1173 762 L1164 766.5 Z" fill="#fff"/>
<g fill="#fff"><circle cx="841" cy="762" r="3.2"/><circle cx="917" cy="762" r="3.2"/><circle cx="990.7" cy="762" r="3.2"/><circle cx="1066.5" cy="762" r="3.2"/></g>
<rect x="840" y="690" width="2.8" height="63" fill="url(#su)"/>
<rect x="990" y="690" width="2.8" height="63" fill="url(#su)"/>
<rect x="916" y="770" width="2.8" height="60" fill="url(#sd)"/>
<rect x="1065.4" y="770" width="2.8" height="60" fill="url(#sd)"/>
<path d="M840 688.3 H848.7 A8.1 8.1 0 0 1 848.7 704.5 H842.8 V708 H840 Z" fill="#4a7bbd"/>
<path d="M990 688.3 H998.7 A8.1 8.1 0 0 1 998.7 704.5 H992.8 V708 H990 Z" fill="#4a7bbd"/>
<path d="M916 814 H918.8 V817.5 H924.6 A8.2 8.2 0 0 1 924.6 834 H916 Z" fill="#4a7bbd"/>
<path d="M1065.4 814 H1068.2 V817.5 H1074.2 A8.2 8.2 0 0 1 1074.2 834 H1065.4 Z" fill="#4a7bbd"/>
</svg>
<div class="t tln" style="left:842.5px;top:692px">01</div>
<div class="t tln" style="left:992.5px;top:692px">03</div>
<div class="t tln" style="left:918.5px;top:821px">02</div>
<div class="t tln" style="left:1067.5px;top:821px">04</div>
<div class="t tll" style="left:864.5px;top:694px;transform:scaleX(.898)">MEDICAL GROUNDS/ PwBD</div>
<div class="t tll" style="left:1013.5px;top:693px;transform:scaleX(.876)">RETIREMENT GROUND</div>
<div class="t tll" style="left:940px;top:821.5px;transform:scaleX(.9)">WORKING SPOUSE</div>
<div class="t tll" style="left:1089.5px;top:821.5px;transform:scaleX(.91)">CHILD EDUCATION</div>
<div class="t" style="left:1177px;top:953px;font-size:12px;color:#8a8a8a">4</div>

<!-- GALLERY -->
<div class="a" style="left:1600px;top:176px;width:1px;height:837px;background:#e6e6e6"></div>
<div class="a tile" style="left:1359.5px;top:197px;width:235px;height:130px;background:linear-gradient(100deg,#f3eeee 0%,#eef0f0 50%,#e4eff4 100%)"></div>
<div class="a" style="left:1444px;top:230px;width:66px;height:66px;border-radius:33px;background:#d3dde3;box-shadow:0 2px 5px rgba(0,0,0,.08)"></div>
<div class="t" style="left:1444px;top:250px;width:66px;text-align:center;font-size:25px;color:#1c3a46;-webkit-text-stroke:.5px #1c3a46">P</div>
<div class="a" style="left:1367px;top:296px;width:170px;height:24px;border-radius:4px;background:rgba(0,0,0,.52)"></div>
<div class="t" style="left:1373px;top:303px;font-size:12.5px;color:#fff;-webkit-text-stroke:.3px #fff;transform:scaleX(.93);transform-origin:0 0">Parvathy (Unverified)</div>
<svg style="left:1492px;top:300px" width="14" height="15"><rect x="4.5" y="0.8" width="5" height="8.5" rx="2.5" fill="#fff"/><path d="M2 6.5 Q2 11.5 7 11.5 Q12 11.5 12 6.5 M7 11.5 V14" stroke="#fff" stroke-width="1.1" fill="none"/><path d="M1 1 L13 14" stroke="#6a6a6a" stroke-width="2.2"/><path d="M1 1 L13 14" stroke="#fff" stroke-width="1.1"/></svg>
<svg style="left:1514px;top:300px" width="15" height="15"><path d="M8.5 1 L14 6.5 L12.5 7 L10 9.5 L10 12 L3 5 L5.5 5 L8 2.5 Z" stroke="#fff" stroke-width="1.1" fill="none" stroke-linejoin="round"/><path d="M5.5 9.5 L1 14" stroke="#fff" stroke-width="1.1"/></svg>

<!-- video tile -->
<div class="a" style="left:1359.5px;top:332px;width:235.5px;height:131px;border-radius:7px;background:#5b5fc7"></div>
<div class="a" style="left:1363px;top:336px;width:228px;height:123px;border-radius:4px;overflow:hidden;background:#a08266"><div class="a" style="left:0;top:0;width:228px;height:123px;filter:blur(1.3px)">
 <div class="a" style="left:0;top:0;width:228px;height:30px;background:linear-gradient(180deg,#8c7f70 0%,#a89680 60%,#9c8670 100%)"></div>
 <div class="a" style="left:0;top:28px;width:228px;height:95px;background:repeating-linear-gradient(90deg,#a88a6b 0 6px,#9f8163 6px 9px,#b09070 9px 14px)"></div>
 <div class="a" style="left:0;top:80px;width:228px;height:43px;background:linear-gradient(180deg,rgba(120,90,60,0),rgba(90,65,45,.5))"></div>
 <div class="a" style="left:0;top:0;width:8px;height:14px;background:#f2f2f2"></div>
 <div class="a" style="left:0;top:30px;width:27px;height:21px;background:linear-gradient(180deg,#f4f4f4,#d9d6d2)"></div>
 <div class="a" style="left:0;top:51px;width:27px;height:4px;background:#7d6a58"></div>
 <div class="a" style="left:36px;top:43px;width:9px;height:10px;background:#e2e4ec"></div>
 <div class="a" style="left:48px;top:31px;width:26px;height:33px;background:#4a3526"></div>
 <div class="a" style="left:51px;top:34px;width:20px;height:27px;background:linear-gradient(180deg,#e6dfda,#f0ebe8)"></div>
 <div class="a" style="left:55px;top:36px;width:11px;height:12px;border-radius:6px;background:#8e6452"></div>
 <div class="a" style="left:52px;top:48px;width:18px;height:12px;border-radius:8px 8px 0 0;background:#e4c8cc"></div>
 <div class="a" style="left:80px;top:30px;width:13px;height:32px;background:#4a3526"></div>
 <div class="a" style="left:82px;top:33px;width:9px;height:26px;background:#dcd4cc"></div>
 <div class="a" style="left:72px;top:65px;width:26px;height:30px;background:#dadbe0"></div>
 <div class="a" style="left:158px;top:22px;width:64px;height:101px;border-radius:32px 32px 0 0;background:#2b2420"></div>
 <div class="a" style="left:164px;top:30px;width:52px;height:93px;border-radius:26px 26px 0 0;background:repeating-linear-gradient(0deg,#1d1917 0 3px,#3b332d 3px 5px)"></div>
 <div class="a" style="left:185px;top:33px;width:7px;height:7px;border-radius:4px;background:#8a8a8a"></div>
 <div class="a" style="left:170px;top:69px;width:10px;height:3px;background:#aab8d8"></div>
 <div class="a" style="left:203px;top:69px;width:18px;height:4px;background:#d8d8dc"></div>
 <div class="a" style="left:215px;top:15px;width:13px;height:108px;background:linear-gradient(90deg,#8d7156,#6a553f)"></div>
 <div class="a" style="left:201px;top:80px;width:27px;height:43px;background:#cfd0d3;transform:skewY(-14deg);transform-origin:0 100%"></div>
 <div class="a" style="left:205px;top:84px;width:23px;height:34px;background:#1c1c1f;transform:skewY(-14deg);transform-origin:0 100%"></div>
 <div class="a" style="left:64px;top:78px;width:125px;height:60px;border-radius:45px 45px 0 0;background:linear-gradient(180deg,#f0f0f2,#d8d8dc)"></div>
 <div class="a" style="left:86px;top:66px;width:80px;height:60px;border-radius:18px 30px 0 0;background:#213f86"></div>
 <div class="a" style="left:106px;top:76px;width:30px;height:50px;background:linear-gradient(180deg,#f0ece8,#cfc8c2);clip-path:polygon(0 0,100% 0,85% 100%,15% 100%)"></div>
 <div class="a" style="left:113px;top:92px;width:16px;height:35px;background:#4a4038"></div>
 <div class="a" style="left:96px;top:22px;width:44px;height:64px;border-radius:20px 20px 22px 22px;background:radial-gradient(ellipse at 50% 40%,#d1a88c 0%,#bf937a 55%,#9e735e 100%)"></div>
 <div class="a" style="left:89px;top:5px;width:55px;height:26px;border-radius:26px 30px 10px 14px;background:#271d19"></div>
 <div class="a" style="left:89px;top:20px;width:9px;height:32px;border-radius:5px;background:#271d19"></div>
 <div class="a" style="left:136px;top:18px;width:8px;height:30px;border-radius:5px;background:#2b201b"></div>
 <div class="a" style="left:103px;top:46px;width:9px;height:3px;border-radius:2px;background:#6e4c3c"></div>
 <div class="a" style="left:123px;top:46px;width:9px;height:3px;border-radius:2px;background:#6e4c3c"></div>
 <div class="a" style="left:110px;top:65px;width:16px;height:4px;border-radius:2px;background:#5e3c30"></div>
</div></div>
<div class="a" style="left:1367px;top:431px;width:193px;height:24px;border-radius:4px;background:rgba(40,40,40,.6)"></div>
<div class="t" style="left:1373px;top:438px;font-size:12.5px;color:#fff;-webkit-text-stroke:.3px #fff;transform:scaleX(.915);transform-origin:0 0">Rajeev Yadav (Unverified)</div>
<svg style="left:1514px;top:435px" width="15" height="15"><path d="M8.5 1 L14 6.5 L12.5 7 L10 9.5 L10 12 L3 5 L5.5 5 L8 2.5 Z" stroke="#fff" stroke-width="1.1" fill="none" stroke-linejoin="round"/><path d="M5.5 9.5 L1 14" stroke="#fff" stroke-width="1.1"/></svg>
<svg style="left:1538px;top:441px" width="13" height="4"><g fill="#fff"><circle cx="1.5" cy="2" r="1.3"/><circle cx="6.5" cy="2" r="1.3"/><circle cx="11.5" cy="2" r="1.3"/></g></svg>
<div class="a tile" style="left:1359.5px;top:467px;width:115px;height:85px;background:linear-gradient(135deg,#f6e6dc 0%,#f6ebe2 60%,#f6efe6 100%)"></div>
<div class="a" style="left:1393.0px;top:486px;width:48px;height:48px;border-radius:50%;background:#cfdde5;box-shadow:0 2px 5px rgba(0,0,0,.08)"></div>
<div class="t" style="left:1393.0px;top:502.4px;width:48px;text-align:center;font-size:17px;color:#1b3a48;-webkit-text-stroke:.5px #1b3a48">SR</div>
<div class="a" style="left:1363.0px;top:525px;width:50px;height:24px;border-radius:4px;background:rgba(0,0,0,.52)"></div>
<svg style="left:1370.5px;top:530px" width="15" height="14"><rect x="0.5" y="1.5" width="8.5" height="8.5" rx="1.5" fill="#fff"/><path d="M9 4.5 L12.5 2.5 V8" stroke="#fff" stroke-width="1.3" fill="none"/><circle cx="10" cy="10" r="3.6" fill="#737373" stroke="#fff" stroke-width="1.1"/><path d="M7.6 12.4 L12.4 7.6" stroke="#fff" stroke-width="1.1"/></svg>
<svg style="left:1392.0px;top:530px" width="15" height="14"><rect x="3" y="0.5" width="4" height="8" rx="2" fill="#fff"/><path d="M1 5 Q1 10.5 5 10.5 V13" stroke="#fff" stroke-width="1.1" fill="none"/><circle cx="10" cy="10" r="3.6" fill="#737373" stroke="#fff" stroke-width="1.1"/><path d="M7.6 12.4 L12.4 7.6" stroke="#fff" stroke-width="1.1"/></svg>
<div class="a tile" style="left:1479.3px;top:467px;width:115px;height:85px;background:linear-gradient(135deg,#f5f1ea 0%,#e6f2ef 55%,#e7eaf2 100%)"></div>
<div class="a" style="left:1512.8px;top:486px;width:48px;height:48px;border-radius:50%;background:#fcebc1;box-shadow:0 2px 5px rgba(0,0,0,.08)"></div>
<div class="t" style="left:1512.8px;top:502.4px;width:48px;text-align:center;font-size:17px;color:#6f5214;-webkit-text-stroke:.5px #6f5214">BR</div>
<div class="a" style="left:1482.8px;top:525px;width:50px;height:24px;border-radius:4px;background:rgba(0,0,0,.52)"></div>
<svg style="left:1490.3px;top:530px" width="15" height="14"><rect x="0.5" y="1.5" width="8.5" height="8.5" rx="1.5" fill="#fff"/><path d="M9 4.5 L12.5 2.5 V8" stroke="#fff" stroke-width="1.3" fill="none"/><circle cx="10" cy="10" r="3.6" fill="#737373" stroke="#fff" stroke-width="1.1"/><path d="M7.6 12.4 L12.4 7.6" stroke="#fff" stroke-width="1.1"/></svg>
<svg style="left:1511.8px;top:530px" width="15" height="14"><rect x="3" y="0.5" width="4" height="8" rx="2" fill="#fff"/><path d="M1 5 Q1 10.5 5 10.5 V13" stroke="#fff" stroke-width="1.1" fill="none"/><circle cx="10" cy="10" r="3.6" fill="#737373" stroke="#fff" stroke-width="1.1"/><path d="M7.6 12.4 L12.4 7.6" stroke="#fff" stroke-width="1.1"/></svg>
<div class="a tile" style="left:1359.5px;top:557.5px;width:115px;height:85px;background:linear-gradient(135deg,#eef3e6 0%,#f3f3e8 60%,#f4efe6 100%)"></div>
<div class="a" style="left:1393.0px;top:576.5px;width:48px;height:48px;border-radius:50%;background:#d3e3d8;box-shadow:0 2px 5px rgba(0,0,0,.08)"></div>
<div class="t" style="left:1393.0px;top:592.9px;width:48px;text-align:center;font-size:17px;color:#1f4a33;-webkit-text-stroke:.5px #1f4a33">S</div>
<div class="a" style="left:1363.0px;top:615.5px;width:50px;height:24px;border-radius:4px;background:rgba(0,0,0,.52)"></div>
<svg style="left:1370.5px;top:620.5px" width="15" height="14"><rect x="0.5" y="1.5" width="8.5" height="8.5" rx="1.5" fill="#fff"/><path d="M9 4.5 L12.5 2.5 V8" stroke="#fff" stroke-width="1.3" fill="none"/><circle cx="10" cy="10" r="3.6" fill="#737373" stroke="#fff" stroke-width="1.1"/><path d="M7.6 12.4 L12.4 7.6" stroke="#fff" stroke-width="1.1"/></svg>
<svg style="left:1392.0px;top:620.5px" width="15" height="14"><rect x="3" y="0.5" width="4" height="8" rx="2" fill="#fff"/><path d="M1 5 Q1 10.5 5 10.5 V13" stroke="#fff" stroke-width="1.1" fill="none"/><circle cx="10" cy="10" r="3.6" fill="#737373" stroke="#fff" stroke-width="1.1"/><path d="M7.6 12.4 L12.4 7.6" stroke="#fff" stroke-width="1.1"/></svg>
<div class="a tile" style="left:1479.3px;top:557.5px;width:115px;height:85px;background:linear-gradient(135deg,#f3e5e6 0%,#ecefec 55%,#dff2ec 100%)"></div>
<div class="a" style="left:1512.8px;top:576.5px;width:48px;height:48px;border-radius:50%;background:#fcebc1;box-shadow:0 2px 5px rgba(0,0,0,.08)"></div>
<div class="t" style="left:1512.8px;top:592.9px;width:48px;text-align:center;font-size:17px;color:#6f5214;-webkit-text-stroke:.5px #6f5214">BR</div>
<div class="a" style="left:1482.8px;top:615.5px;width:50px;height:24px;border-radius:4px;background:rgba(0,0,0,.52)"></div>
<svg style="left:1490.3px;top:620.5px" width="15" height="14"><rect x="0.5" y="1.5" width="8.5" height="8.5" rx="1.5" fill="#fff"/><path d="M9 4.5 L12.5 2.5 V8" stroke="#fff" stroke-width="1.3" fill="none"/><circle cx="10" cy="10" r="3.6" fill="#737373" stroke="#fff" stroke-width="1.1"/><path d="M7.6 12.4 L12.4 7.6" stroke="#fff" stroke-width="1.1"/></svg>
<svg style="left:1511.8px;top:620.5px" width="15" height="14"><rect x="3" y="0.5" width="4" height="8" rx="2" fill="#fff"/><path d="M1 5 Q1 10.5 5 10.5 V13" stroke="#fff" stroke-width="1.1" fill="none"/><circle cx="10" cy="10" r="3.6" fill="#737373" stroke="#fff" stroke-width="1.1"/><path d="M7.6 12.4 L12.4 7.6" stroke="#fff" stroke-width="1.1"/></svg>
<div class="a tile" style="left:1359.5px;top:647.5px;width:115px;height:85px;background:linear-gradient(135deg,#f6ebe7 0%,#f3f0e6 60%,#f2f3e2 100%)"></div>
<div class="a" style="left:1393.0px;top:666.5px;width:48px;height:48px;border-radius:50%;background:#dae2d6;box-shadow:0 2px 5px rgba(0,0,0,.08)"></div>
<div class="t" style="left:1393.0px;top:682.9px;width:48px;text-align:center;font-size:17px;color:#2d4a2b;-webkit-text-stroke:.5px #2d4a2b">A</div>
<div class="a" style="left:1363.0px;top:705.5px;width:50px;height:24px;border-radius:4px;background:rgba(0,0,0,.52)"></div>
<svg style="left:1370.5px;top:710.5px" width="15" height="14"><rect x="0.5" y="1.5" width="8.5" height="8.5" rx="1.5" fill="#fff"/><path d="M9 4.5 L12.5 2.5 V8" stroke="#fff" stroke-width="1.3" fill="none"/><circle cx="10" cy="10" r="3.6" fill="#737373" stroke="#fff" stroke-width="1.1"/><path d="M7.6 12.4 L12.4 7.6" stroke="#fff" stroke-width="1.1"/></svg>
<svg style="left:1392.0px;top:710.5px" width="15" height="14"><rect x="3" y="0.5" width="4" height="8" rx="2" fill="#fff"/><path d="M1 5 Q1 10.5 5 10.5 V13" stroke="#fff" stroke-width="1.1" fill="none"/><circle cx="10" cy="10" r="3.6" fill="#737373" stroke="#fff" stroke-width="1.1"/><path d="M7.6 12.4 L12.4 7.6" stroke="#fff" stroke-width="1.1"/></svg>
<div class="a tile" style="left:1479.3px;top:647.5px;width:115px;height:85px;background:linear-gradient(135deg,#f3eef8 0%,#eff0f8 55%,#e8f2f6 100%)"></div>
<div class="a" style="left:1518.3px;top:662.0px;width:37.0px;height:37.0px;border-radius:50%;background:#e1ead6;box-shadow:0 2px 5px rgba(0,0,0,.08)"></div>
<div class="t" style="left:1518.3px;top:674.9px;width:37.0px;text-align:center;font-size:13px;color:#2e4b2b;-webkit-text-stroke:.4px #2e4b2b">AB</div>
<div class="a" style="left:1482.8px;top:705.5px;width:50px;height:24px;border-radius:4px;background:rgba(0,0,0,.52)"></div>
<svg style="left:1490.3px;top:710.5px" width="15" height="14"><rect x="0.5" y="1.5" width="8.5" height="8.5" rx="1.5" fill="#fff"/><path d="M9 4.5 L12.5 2.5 V8" stroke="#fff" stroke-width="1.3" fill="none"/><circle cx="10" cy="10" r="3.6" fill="#737373" stroke="#fff" stroke-width="1.1"/><path d="M7.6 12.4 L12.4 7.6" stroke="#fff" stroke-width="1.1"/></svg>
<svg style="left:1511.8px;top:710.5px" width="15" height="14"><rect x="3" y="0.5" width="4" height="8" rx="2" fill="#fff"/><path d="M1 5 Q1 10.5 5 10.5 V13" stroke="#fff" stroke-width="1.1" fill="none"/><circle cx="10" cy="10" r="3.6" fill="#737373" stroke="#fff" stroke-width="1.1"/><path d="M7.6 12.4 L12.4 7.6" stroke="#fff" stroke-width="1.1"/></svg>
<div class="a tile" style="left:1359.5px;top:737.5px;width:115px;height:85px;background:linear-gradient(135deg,#ebeaf4 0%,#e6f0f0 55%,#dcf2ea 100%)"></div>
<div class="a" style="left:1393.0px;top:756.5px;width:48px;height:48px;border-radius:50%;background:#f4d2d4;box-shadow:0 2px 5px rgba(0,0,0,.08)"></div>
<div class="t" style="left:1393.0px;top:772.9px;width:48px;text-align:center;font-size:17px;color:#7b2933;-webkit-text-stroke:.5px #7b2933">DD</div>
<div class="a" style="left:1363.0px;top:795.5px;width:50px;height:24px;border-radius:4px;background:rgba(0,0,0,.52)"></div>
<svg style="left:1370.5px;top:800.5px" width="15" height="14"><rect x="0.5" y="1.5" width="8.5" height="8.5" rx="1.5" fill="#fff"/><path d="M9 4.5 L12.5 2.5 V8" stroke="#fff" stroke-width="1.3" fill="none"/><circle cx="10" cy="10" r="3.6" fill="#737373" stroke="#fff" stroke-width="1.1"/><path d="M7.6 12.4 L12.4 7.6" stroke="#fff" stroke-width="1.1"/></svg>
<svg style="left:1392.0px;top:800.5px" width="15" height="14"><rect x="3" y="0.5" width="4" height="8" rx="2" fill="#fff"/><path d="M1 5 Q1 10.5 5 10.5 V13" stroke="#fff" stroke-width="1.1" fill="none"/><circle cx="10" cy="10" r="3.6" fill="#737373" stroke="#fff" stroke-width="1.1"/><path d="M7.6 12.4 L12.4 7.6" stroke="#fff" stroke-width="1.1"/></svg>
<div class="a tile" style="left:1479.3px;top:737.5px;width:115px;height:85px;background:linear-gradient(135deg,#f6e7db 0%,#f6ebdf 60%,#f5efe3 100%)"></div>
<div class="a" style="left:1512.8px;top:756.5px;width:48px;height:48px;border-radius:50%;background:#dbe2d5;box-shadow:0 2px 5px rgba(0,0,0,.08)"></div>
<div class="t" style="left:1512.8px;top:772.9px;width:48px;text-align:center;font-size:17px;color:#2d4a2b;-webkit-text-stroke:.5px #2d4a2b">AY</div>
<div class="a" style="left:1482.8px;top:795.5px;width:50px;height:24px;border-radius:4px;background:rgba(0,0,0,.52)"></div>
<svg style="left:1490.3px;top:800.5px" width="15" height="14"><rect x="0.5" y="1.5" width="8.5" height="8.5" rx="1.5" fill="#fff"/><path d="M9 4.5 L12.5 2.5 V8" stroke="#fff" stroke-width="1.3" fill="none"/><circle cx="10" cy="10" r="3.6" fill="#737373" stroke="#fff" stroke-width="1.1"/><path d="M7.6 12.4 L12.4 7.6" stroke="#fff" stroke-width="1.1"/></svg>
<svg style="left:1511.8px;top:800.5px" width="15" height="14"><rect x="3" y="0.5" width="4" height="8" rx="2" fill="#fff"/><path d="M1 5 Q1 10.5 5 10.5 V13" stroke="#fff" stroke-width="1.1" fill="none"/><circle cx="10" cy="10" r="3.6" fill="#737373" stroke="#fff" stroke-width="1.1"/><path d="M7.6 12.4 L12.4 7.6" stroke="#fff" stroke-width="1.1"/></svg>
<svg style="left:1506px;top:707px" width="9" height="10"><rect x="0.5" y="0.5" width="3" height="9" fill="#242424"/><rect x="5" y="0.5" width="3" height="9" fill="#242424"/></svg>
<div class="t" style="left:1524px;top:706px;font-size:12.5px;color:#242424;-webkit-text-stroke:.35px #242424;transform-origin:0 0">On hold</div>
<svg style="left:1446px;top:836px" width="9" height="13"><path d="M7.5 1 L1.5 6.5 L7.5 12" stroke="#b8b8b8" stroke-width="1.3" fill="none"/></svg>
<div class="t" style="left:1467px;top:835px;font-size:14px;color:#242424">1/7</div>
<svg style="left:1499px;top:836px" width="9" height="13"><path d="M1.5 1 L7.5 6.5 L1.5 12" stroke="#424242" stroke-width="1.3" fill="none"/></svg>
<div class="a tile" style="left:1359.5px;top:863px;width:235px;height:130px;background:linear-gradient(135deg,#e9e7f3,#e6e4f1)"></div>
<div class="a" style="left:1445px;top:896.5px;width:64px;height:64px;border-radius:32px;background:#d8d5e9;box-shadow:0 2px 5px rgba(0,0,0,.08)"></div>
<div class="t" style="left:1445px;top:917px;width:64px;text-align:center;font-size:25px;color:#2c2866;-webkit-text-stroke:.5px #2c2866">VH</div>
<div class="a" style="left:1367px;top:962px;width:28px;height:24px;border-radius:4px;background:rgba(0,0,0,.52)"></div>
<svg style="left:1374px;top:967px" width="14" height="15"><rect x="4.5" y="0.8" width="5" height="8.5" rx="2.5" fill="#fff"/><path d="M2 6.5 Q2 11.5 7 11.5 Q12 11.5 12 6.5 M7 11.5 V14" stroke="#fff" stroke-width="1.1" fill="none"/><path d="M1 1 L13 14" stroke="#6a6a6a" stroke-width="2.2"/><path d="M1 1 L13 14" stroke="#fff" stroke-width="1.1"/></svg>
<!-- stage name tag -->
<div class="a" style="left:81px;top:977px;width:145px;height:24px;border-radius:4px;background:rgba(0,0,0,.5)"></div>
<div class="t" style="left:87px;top:984px;font-size:12.5px;color:#fff;-webkit-text-stroke:.3px #fff;transform:scaleX(.918);transform-origin:0 0">Rajeev Yadav (Unverified)</div>
<!-- sharing bar -->
<div class="a" style="left:574px;top:314px;width:337px;height:28px;background:#2b2b2b"></div>
<svg style="left:580px;top:320px" width="4" height="16"><g fill="#8a8a8a"><rect x="0" y="0" width="3" height="1"/><rect x="0" y="3" width="3" height="1"/><rect x="0" y="6" width="3" height="1"/><rect x="0" y="9" width="3" height="1"/><rect x="0" y="12" width="3" height="1"/><rect x="0" y="15" width="3" height="1"/></g></svg>
<svg style="left:597px;top:322px" width="15" height="12"><rect x="0.7" y="0.7" width="13.3" height="10.6" rx="1" stroke="#d8d8d8" stroke-width="1.3" fill="none"/><path d="M7.3 9.5 V4 M4.6 6.3 L7.3 3.4 L10 6.3" stroke="#e8e8e8" stroke-width="1.6" fill="none"/></svg>
<div class="t" style="left:620px;top:323px;font-size:11.5px;color:#e6e6e6;transform:scaleX(.904);transform-origin:0 0">You are sharing your entire screen.</div>
<div class="a" style="left:796px;top:318px;width:69px;height:20px;border-radius:3px;background:#0e63e8"></div>
<div class="t" style="left:796px;top:323px;width:69px;text-align:center;font-size:11px;color:#fff">Stop Sharing</div>
<div class="a" style="left:874px;top:319px;width:1.5px;height:17px;background:#e0e0e0"></div>
<div class="a" style="left:884px;top:319px;width:18px;height:17px;border-radius:3px;background:#3c3c3c"></div>
<div class="a" style="left:888px;top:331px;width:9px;height:2px;background:#e0e0e0"></div>


<!-- PARTICIPANTS -->
<div class="t" style="left:1621px;top:202px;font-size:15.5px;font-weight:bold;color:#242424">Participants</div>
<svg style="left:1845px;top:207px" width="14" height="4"><g fill="#424242"><circle cx="1.7" cy="2" r="1.4"/><circle cx="7" cy="2" r="1.4"/><circle cx="12.3" cy="2" r="1.4"/></g></svg>
<svg style="left:1877px;top:202px" width="14" height="14"><path d="M1 1 L13 13 M13 1 L1 13" stroke="#424242" stroke-width="1.2"/></svg>
<div class="a" style="left:1601px;top:237px;width:319px;height:1px;background:#e0e0e0"></div>
<div class="a" style="left:1621px;top:254px;width:279px;height:32px;border-radius:4px;background:#fff;border-bottom:2px solid #5b5fc7"></div>
<div class="t" style="left:1634px;top:263px;font-size:14px;color:#707070">Type a name</div>
<svg style="left:1871px;top:262px" width="16" height="16"><circle cx="6.5" cy="6.5" r="5" stroke="#424242" stroke-width="1.3" fill="none"/><path d="M10.2 10.2 L14.5 14.5" stroke="#424242" stroke-width="1.4"/></svg>
<div class="a" style="left:1621px;top:296px;width:279px;height:32px;border-radius:4px;background:#fff;border:1px solid #d1d1d1"></div>
<svg style="left:1712px;top:304px" width="17" height="16"><path d="M6.5 3 H3 Q1 3 1 5 V13 Q1 15 3 15 H11 Q13 15 13 13 V11.5" stroke="#242424" stroke-width="1.2" fill="none"/><path d="M10.5 1 L15.5 5.5 L10.5 10 V7.5 Q6 7.5 4.5 11 Q4.5 3.8 10.5 3.5 Z" stroke="#242424" stroke-width="1.2" fill="none" stroke-linejoin="round"/></svg>
<div class="t" style="left:1736px;top:305px;font-size:14px;font-weight:bold;color:#242424;transform:scaleX(.93);transform-origin:0 0">Share invite</div>
<svg style="left:1610px;top:349px" width="10" height="7"><path d="M1 1 L5 5 L9 1" stroke="#616161" stroke-width="1.1" fill="none"/></svg>
<div class="t" style="left:1629px;top:346px;font-size:12px;color:#616161;transform:scaleX(.94);transform-origin:0 0">Presenters (4)</div>
<div class="a" style="left:1812px;top:340px;width:72px;height:24px;border-radius:4px;background:#fff;border:1px solid #d1d1d1"></div>
<div class="t" style="left:1812px;top:346px;width:72px;text-align:center;font-size:12px;color:#242424">Mute all</div>
<div class="a" style="left:1622px;top:379px;width:32px;height:32px;border-radius:16px;background:#dcd8ee"></div>
<div class="t" style="left:1622px;top:389px;width:32px;text-align:center;font-size:12px;color:#3b3670;-webkit-text-stroke:.35px currentColor">VH</div>
<div class="t pn" style="left:1666px;top:381px;transform:scaleX(.965);transform-origin:0 0">VADUKALA HARISHBABU</div>
<div class="t" style="left:1666px;top:399px;font-size:11.5px;color:#616161">Organizer</div>
<svg style="left:1867px;top:386px" width="17" height="17"><path d="M6 4 Q6 1 8.5 1 Q11 1 11 4 V8.5 Q11 9.5 10.5 10" stroke="#242424" stroke-width="1.2" fill="none"/><path d="M6 6.5 V8.5 Q6 11 8.5 11" stroke="#242424" stroke-width="1.2" fill="none"/><path d="M3.5 8 Q3.5 13.3 8.5 13.3 Q10.5 13.3 11.8 12.3 M13.5 8 Q13.5 9.5 13 10.5 M8.5 13.3 V16" stroke="#242424" stroke-width="1.2" fill="none"/><path d="M1.5 1.5 L15.5 15.5" stroke="#242424" stroke-width="1.2"/></svg><div class="a" style="left:1622px;top:427px;width:32px;height:32px;border-radius:16px;background:#d6f0f2"></div>
<div class="t" style="left:1622px;top:437px;width:32px;text-align:center;font-size:12px;color:#1c6a70;-webkit-text-stroke:.35px currentColor">MM</div>
<div class="t pn" style="left:1666px;top:437px">Meena Madhusu... (Unverified)</div>
<svg style="left:1867px;top:435px" width="17" height="17"><path d="M6 4 Q6 1 8.5 1 Q11 1 11 4 V8.5 Q11 9.5 10.5 10" stroke="#242424" stroke-width="1.2" fill="none"/><path d="M6 6.5 V8.5 Q6 11 8.5 11" stroke="#242424" stroke-width="1.2" fill="none"/><path d="M3.5 8 Q3.5 13.3 8.5 13.3 Q10.5 13.3 11.8 12.3 M13.5 8 Q13.5 9.5 13 10.5 M8.5 13.3 V16" stroke="#242424" stroke-width="1.2" fill="none"/><path d="M1.5 1.5 L15.5 15.5" stroke="#242424" stroke-width="1.2"/></svg><div class="a" style="left:1622px;top:475px;width:32px;height:32px;border-radius:16px;background:#d5dfe3"></div>
<div class="t" style="left:1622px;top:485px;width:32px;text-align:center;font-size:12px;color:#1e3a46;-webkit-text-stroke:.35px currentColor">P</div>
<div class="t pn" style="left:1666px;top:485px">Parvathy (Unverified)</div>
<svg style="left:1840px;top:483px" width="16" height="16"><path d="M9.5 1.2 L14.8 6.5 Q15.2 7 14.6 7.3 L12.3 8.2 L9.2 11.3 L9.4 13.2 Q9.4 14 8.8 13.6 L2.4 7.2 Q2 6.6 2.8 6.6 L4.7 6.8 L7.8 3.7 L8.7 1.4 Q9 .8 9.5 1.2 Z" stroke="#242424" stroke-width="1.1" fill="none" stroke-linejoin="round"/><path d="M5.5 10.5 L1.2 14.8" stroke="#242424" stroke-width="1.1" stroke-linecap="round"/></svg><svg style="left:1867px;top:483px" width="17" height="17"><path d="M6 4 Q6 1 8.5 1 Q11 1 11 4 V8.5 Q11 9.5 10.5 10" stroke="#242424" stroke-width="1.2" fill="none"/><path d="M6 6.5 V8.5 Q6 11 8.5 11" stroke="#242424" stroke-width="1.2" fill="none"/><path d="M3.5 8 Q3.5 13.3 8.5 13.3 Q10.5 13.3 11.8 12.3 M13.5 8 Q13.5 9.5 13 10.5 M8.5 13.3 V16" stroke="#242424" stroke-width="1.2" fill="none"/><path d="M1.5 1.5 L15.5 15.5" stroke="#242424" stroke-width="1.2"/></svg><div class="a" style="left:1618px;top:519px;width:40px;height:40px;border-radius:20px;border:2px solid #5b5fc7"></div>
<div class="a" style="left:1622px;top:523px;width:32px;height:32px;border-radius:16px;background:#c9d6ea"></div>
<div class="t" style="left:1622px;top:533px;width:32px;text-align:center;font-size:12px;color:#1f3a5f;-webkit-text-stroke:.35px currentColor">RY</div>
<div class="t pn" style="left:1666px;top:533px;font-weight:bold;color:#242424;transform:scaleX(.965);transform-origin:0 0">Rajeev Yadav (Unverified)</div>
<svg style="left:1840px;top:531px" width="16" height="16"><path d="M9.5 1.2 L14.8 6.5 Q15.2 7 14.6 7.3 L12.3 8.2 L9.2 11.3 L9.4 13.2 Q9.4 14 8.8 13.6 L2.4 7.2 Q2 6.6 2.8 6.6 L4.7 6.8 L7.8 3.7 L8.7 1.4 Q9 .8 9.5 1.2 Z" stroke="#242424" stroke-width="1.1" fill="none" stroke-linejoin="round"/><path d="M5.5 10.5 L1.2 14.8" stroke="#242424" stroke-width="1.1" stroke-linecap="round"/></svg><svg style="left:1870px;top:531px" width="13" height="16"><rect x="3.5" y="0.5" width="6" height="10" rx="3" fill="#242424"/><path d="M1.3 7.5 Q1.3 12.5 6.5 12.5 Q11.7 12.5 11.7 7.5 M6.5 12.5 V15.5" stroke="#242424" stroke-width="1.3" fill="none"/></svg><svg style="left:1610px;top:579px" width="10" height="7"><path d="M1 1 L5 5 L9 1" stroke="#616161" stroke-width="1.1" fill="none"/></svg>
<div class="t" style="left:1629px;top:576px;font-size:12px;color:#616161">Attendees (54)</div>
<div class="a" style="left:1622px;top:609px;width:32px;height:32px;border-radius:16px;background:#dee3da"></div>
<div class="t" style="left:1622px;top:619px;width:32px;text-align:center;font-size:12px;color:#2c4a2c;-webkit-text-stroke:.35px currentColor">A</div>
<div class="t pn" style="left:1666px;top:619px">a (Unverified)</div>
<svg style="left:1839px;top:618px" width="18" height="16"><path d="M9 12.5 H2.8 Q1 12.5 1 10.7 V3.3 Q1 1.5 2.8 1.5 H10.2 Q12 1.5 12 3.3 V7" stroke="#c4c4c4" stroke-width="1.1" fill="none"/><path d="M12 5 L15.5 3 V7.5" stroke="#c4c4c4" stroke-width="1.1" fill="none"/><circle cx="13" cy="11.5" r="3.6" stroke="#c4c4c4" stroke-width="1.1" fill="none"/><path d="M10.5 14 L15.5 9" stroke="#c4c4c4" stroke-width="1.1"/></svg><svg style="left:1868px;top:617px" width="18" height="18"><path d="M5 6 V2.5 Q5 0.8 7 0.8 Q9 0.8 9 2.5 V8.5" stroke="#242424" stroke-width="1.2" fill="none"/><path d="M5 6 V9 Q5 11 7 11" stroke="#242424" stroke-width="1.2" fill="none"/><path d="M2 7 Q2 12.3 6.5 13 M6.5 13 V16.5" stroke="#242424" stroke-width="1.2" fill="none"/><circle cx="12.3" cy="12.3" r="4.2" stroke="#242424" stroke-width="1.3" fill="none"/><path d="M9.4 15.2 L15.2 9.4" stroke="#242424" stroke-width="1.3"/></svg><div class="a" style="left:1622px;top:657px;width:32px;height:32px;border-radius:16px;background:#d8eff4"></div>
<div class="t" style="left:1622px;top:667px;width:32px;text-align:center;font-size:12px;color:#1c5c6e;-webkit-text-stroke:.35px currentColor">AJ</div>
<div class="t pn" style="left:1666px;top:667px">A N JOJO (Unverified)</div>
<svg style="left:1839px;top:666px" width="18" height="16"><path d="M9 12.5 H2.8 Q1 12.5 1 10.7 V3.3 Q1 1.5 2.8 1.5 H10.2 Q12 1.5 12 3.3 V7" stroke="#c4c4c4" stroke-width="1.1" fill="none"/><path d="M12 5 L15.5 3 V7.5" stroke="#c4c4c4" stroke-width="1.1" fill="none"/><circle cx="13" cy="11.5" r="3.6" stroke="#c4c4c4" stroke-width="1.1" fill="none"/><path d="M10.5 14 L15.5 9" stroke="#c4c4c4" stroke-width="1.1"/></svg><svg style="left:1868px;top:665px" width="18" height="18"><path d="M5 6 V2.5 Q5 0.8 7 0.8 Q9 0.8 9 2.5 V8.5" stroke="#242424" stroke-width="1.2" fill="none"/><path d="M5 6 V9 Q5 11 7 11" stroke="#242424" stroke-width="1.2" fill="none"/><path d="M2 7 Q2 12.3 6.5 13 M6.5 13 V16.5" stroke="#242424" stroke-width="1.2" fill="none"/><circle cx="12.3" cy="12.3" r="4.2" stroke="#242424" stroke-width="1.3" fill="none"/><path d="M9.4 15.2 L15.2 9.4" stroke="#242424" stroke-width="1.3"/></svg><div class="a" style="left:1622px;top:705px;width:32px;height:32px;border-radius:16px;background:#e5ecd9"></div>
<div class="t" style="left:1622px;top:715px;width:32px;text-align:center;font-size:12px;color:#3b5a22;-webkit-text-stroke:.35px currentColor">AB</div>
<div class="t pn" style="left:1666px;top:715px">Adithya B (Unverified)</div>
<div class="t" style="left:1841px;top:715px;font-size:12px;color:#424242">On hold</div>
<div class="a" style="left:1622px;top:753px;width:32px;height:32px;border-radius:16px;background:#e5ecd9"></div>
<div class="t" style="left:1622px;top:763px;width:32px;text-align:center;font-size:12px;color:#3b5a22;-webkit-text-stroke:.35px currentColor">AB</div>
<div class="t pn" style="left:1666px;top:763px">Adithya B (Unverified)</div>
<svg style="left:1839px;top:762px" width="18" height="16"><path d="M9 12.5 H2.8 Q1 12.5 1 10.7 V3.3 Q1 1.5 2.8 1.5 H10.2 Q12 1.5 12 3.3 V7" stroke="#c4c4c4" stroke-width="1.1" fill="none"/><path d="M12 5 L15.5 3 V7.5" stroke="#c4c4c4" stroke-width="1.1" fill="none"/><circle cx="13" cy="11.5" r="3.6" stroke="#c4c4c4" stroke-width="1.1" fill="none"/><path d="M10.5 14 L15.5 9" stroke="#c4c4c4" stroke-width="1.1"/></svg><svg style="left:1868px;top:761px" width="18" height="18"><path d="M5 6 V2.5 Q5 0.8 7 0.8 Q9 0.8 9 2.5 V8.5" stroke="#242424" stroke-width="1.2" fill="none"/><path d="M5 6 V9 Q5 11 7 11" stroke="#242424" stroke-width="1.2" fill="none"/><path d="M2 7 Q2 12.3 6.5 13 M6.5 13 V16.5" stroke="#242424" stroke-width="1.2" fill="none"/><circle cx="12.3" cy="12.3" r="4.2" stroke="#242424" stroke-width="1.3" fill="none"/><path d="M9.4 15.2 L15.2 9.4" stroke="#242424" stroke-width="1.3"/></svg><div class="a" style="left:1622px;top:801px;width:32px;height:32px;border-radius:16px;background:#f6d5ca"></div>
<div class="t" style="left:1622px;top:811px;width:32px;text-align:center;font-size:12px;color:#8a2f16;-webkit-text-stroke:.35px currentColor">AP</div>
<div class="t pn" style="left:1666px;top:811px">Administratio...&nbsp;&nbsp; (External)</div>
<svg style="left:1839px;top:810px" width="18" height="16"><path d="M9 12.5 H2.8 Q1 12.5 1 10.7 V3.3 Q1 1.5 2.8 1.5 H10.2 Q12 1.5 12 3.3 V7" stroke="#c4c4c4" stroke-width="1.1" fill="none"/><path d="M12 5 L15.5 3 V7.5" stroke="#c4c4c4" stroke-width="1.1" fill="none"/><circle cx="13" cy="11.5" r="3.6" stroke="#c4c4c4" stroke-width="1.1" fill="none"/><path d="M10.5 14 L15.5 9" stroke="#c4c4c4" stroke-width="1.1"/></svg><svg style="left:1868px;top:809px" width="18" height="18"><path d="M5 6 V2.5 Q5 0.8 7 0.8 Q9 0.8 9 2.5 V8.5" stroke="#242424" stroke-width="1.2" fill="none"/><path d="M5 6 V9 Q5 11 7 11" stroke="#242424" stroke-width="1.2" fill="none"/><path d="M2 7 Q2 12.3 6.5 13 M6.5 13 V16.5" stroke="#242424" stroke-width="1.2" fill="none"/><circle cx="12.3" cy="12.3" r="4.2" stroke="#242424" stroke-width="1.3" fill="none"/><path d="M9.4 15.2 L15.2 9.4" stroke="#242424" stroke-width="1.3"/></svg><div class="a" style="left:1622px;top:849px;width:32px;height:32px;border-radius:16px;background:#d4efe0"></div>
<div class="t" style="left:1622px;top:859px;width:32px;text-align:center;font-size:12px;color:#1e5a3b;-webkit-text-stroke:.35px currentColor">AK</div>
<div class="t pn" style="left:1666px;top:859px">Aman Kheta... (Unverified)</div>
<svg style="left:1839px;top:858px" width="18" height="16"><path d="M9 12.5 H2.8 Q1 12.5 1 10.7 V3.3 Q1 1.5 2.8 1.5 H10.2 Q12 1.5 12 3.3 V7" stroke="#c4c4c4" stroke-width="1.1" fill="none"/><path d="M12 5 L15.5 3 V7.5" stroke="#c4c4c4" stroke-width="1.1" fill="none"/><circle cx="13" cy="11.5" r="3.6" stroke="#c4c4c4" stroke-width="1.1" fill="none"/><path d="M10.5 14 L15.5 9" stroke="#c4c4c4" stroke-width="1.1"/></svg><svg style="left:1868px;top:857px" width="18" height="18"><path d="M5 6 V2.5 Q5 0.8 7 0.8 Q9 0.8 9 2.5 V8.5" stroke="#242424" stroke-width="1.2" fill="none"/><path d="M5 6 V9 Q5 11 7 11" stroke="#242424" stroke-width="1.2" fill="none"/><path d="M2 7 Q2 12.3 6.5 13 M6.5 13 V16.5" stroke="#242424" stroke-width="1.2" fill="none"/><circle cx="12.3" cy="12.3" r="4.2" stroke="#242424" stroke-width="1.3" fill="none"/><path d="M9.4 15.2 L15.2 9.4" stroke="#242424" stroke-width="1.3"/></svg><div class="a" style="left:1622px;top:897px;width:32px;height:32px;border-radius:16px;background:#fcdede"></div>
<div class="t" style="left:1622px;top:907px;width:32px;text-align:center;font-size:12px;color:#8b2f35;-webkit-text-stroke:.35px currentColor">A</div>
<div class="t pn" style="left:1666px;top:907px">anit (Unverified)</div>
<svg style="left:1839px;top:906px" width="18" height="16"><path d="M9 12.5 H2.8 Q1 12.5 1 10.7 V3.3 Q1 1.5 2.8 1.5 H10.2 Q12 1.5 12 3.3 V7" stroke="#c4c4c4" stroke-width="1.1" fill="none"/><path d="M12 5 L15.5 3 V7.5" stroke="#c4c4c4" stroke-width="1.1" fill="none"/><circle cx="13" cy="11.5" r="3.6" stroke="#c4c4c4" stroke-width="1.1" fill="none"/><path d="M10.5 14 L15.5 9" stroke="#c4c4c4" stroke-width="1.1"/></svg><svg style="left:1868px;top:905px" width="18" height="18"><path d="M5 6 V2.5 Q5 0.8 7 0.8 Q9 0.8 9 2.5 V8.5" stroke="#242424" stroke-width="1.2" fill="none"/><path d="M5 6 V9 Q5 11 7 11" stroke="#242424" stroke-width="1.2" fill="none"/><path d="M2 7 Q2 12.3 6.5 13 M6.5 13 V16.5" stroke="#242424" stroke-width="1.2" fill="none"/><circle cx="12.3" cy="12.3" r="4.2" stroke="#242424" stroke-width="1.3" fill="none"/><path d="M9.4 15.2 L15.2 9.4" stroke="#242424" stroke-width="1.3"/></svg><div class="a" style="left:1622px;top:945px;width:32px;height:32px;border-radius:16px;background:#f5d6dc"></div>
<div class="t" style="left:1622px;top:955px;width:32px;text-align:center;font-size:12px;color:#7f2437;-webkit-text-stroke:.35px currentColor">AK</div>
<div class="t pn" style="left:1666px;top:955px">Arvind Kumar (Unverified)</div>
<svg style="left:1839px;top:954px" width="18" height="16"><path d="M9 12.5 H2.8 Q1 12.5 1 10.7 V3.3 Q1 1.5 2.8 1.5 H10.2 Q12 1.5 12 3.3 V7" stroke="#c4c4c4" stroke-width="1.1" fill="none"/><path d="M12 5 L15.5 3 V7.5" stroke="#c4c4c4" stroke-width="1.1" fill="none"/><circle cx="13" cy="11.5" r="3.6" stroke="#c4c4c4" stroke-width="1.1" fill="none"/><path d="M10.5 14 L15.5 9" stroke="#c4c4c4" stroke-width="1.1"/></svg><svg style="left:1868px;top:953px" width="18" height="18"><path d="M5 6 V2.5 Q5 0.8 7 0.8 Q9 0.8 9 2.5 V8.5" stroke="#242424" stroke-width="1.2" fill="none"/><path d="M5 6 V9 Q5 11 7 11" stroke="#242424" stroke-width="1.2" fill="none"/><path d="M2 7 Q2 12.3 6.5 13 M6.5 13 V16.5" stroke="#242424" stroke-width="1.2" fill="none"/><circle cx="12.3" cy="12.3" r="4.2" stroke="#242424" stroke-width="1.3" fill="none"/><path d="M9.4 15.2 L15.2 9.4" stroke="#242424" stroke-width="1.3"/></svg><div class="a" style="left:1622px;top:993px;width:32px;height:32px;border-radius:16px;background:#dcd8ef"></div>
<div class="t" style="left:1622px;top:1003px;width:32px;text-align:center;font-size:12px;color:#3b3670;-webkit-text-stroke:.35px currentColor">A</div>
<div class="t pn" style="left:1666px;top:1003px">Ashif (Unverified)</div>
<svg style="left:1839px;top:1002px" width="18" height="16"><path d="M9 12.5 H2.8 Q1 12.5 1 10.7 V3.3 Q1 1.5 2.8 1.5 H10.2 Q12 1.5 12 3.3 V7" stroke="#c4c4c4" stroke-width="1.1" fill="none"/><path d="M12 5 L15.5 3 V7.5" stroke="#c4c4c4" stroke-width="1.1" fill="none"/><circle cx="13" cy="11.5" r="3.6" stroke="#c4c4c4" stroke-width="1.1" fill="none"/><path d="M10.5 14 L15.5 9" stroke="#c4c4c4" stroke-width="1.1"/></svg><svg style="left:1868px;top:1001px" width="18" height="18"><path d="M5 6 V2.5 Q5 0.8 7 0.8 Q9 0.8 9 2.5 V8.5" stroke="#242424" stroke-width="1.2" fill="none"/><path d="M5 6 V9 Q5 11 7 11" stroke="#242424" stroke-width="1.2" fill="none"/><path d="M2 7 Q2 12.3 6.5 13 M6.5 13 V16.5" stroke="#242424" stroke-width="1.2" fill="none"/><circle cx="12.3" cy="12.3" r="4.2" stroke="#242424" stroke-width="1.3" fill="none"/><path d="M9.4 15.2 L15.2 9.4" stroke="#242424" stroke-width="1.3"/></svg>
<div id="taskbar" class="a"></div>

<!-- TASKBAR -->
<svg style="left:17px;top:1022px" width="34" height="30"><circle cx="6.8" cy="7.5" r="4.8" fill="#2f7de6"/><circle cx="5.5" cy="6.2" r="1.8" fill="#9fd0ff"/><path d="M9 20 Q6 20 6 17 Q6 13.5 10 13.5 Q11.5 10 15.5 10.5 Q19.5 11 20 15 Q23.5 15 23.5 18 Q23.5 20.5 20.5 20.5 Z" fill="#b8d6f2" stroke="#8fb8e0" stroke-width=".8"/><path d="M10 22 V25 M14.5 22 V26 M19 22 V25" stroke="#2f7de6" stroke-width="2.6" stroke-linecap="round"/></svg>
<div class="a" style="left:30.5px;top:1021px;width:15px;height:15px;border-radius:8px;background:#c42b1c"></div>
<div class="t" style="left:30.5px;top:1023px;width:15px;text-align:center;font-size:11px;color:#fff">6</div>
<div class="t" style="left:50px;top:1024px;font-size:12px;color:#1a1a1a">Rain to stop</div>
<div class="t" style="left:50px;top:1040px;font-size:11.5px;color:#5c5c5c">11:34 am</div>
<svg style="left:704px;top:1026px" width="25" height="25"><defs><linearGradient id="wg" x1="0" y1="0" x2="1" y2="1"><stop offset="0" stop-color="#2ec1f7"/><stop offset="1" stop-color="#0a6fd0"/></linearGradient></defs><g fill="url(#wg)"><rect x="0.5" y="0.5" width="11" height="11"/><rect x="13" y="0.5" width="11" height="11"/><rect x="0.5" y="13" width="11" height="11"/><rect x="13" y="13" width="11" height="11"/></g></svg>
<div class="a" style="left:742px;top:1023px;width:218px;height:30px;border-radius:15px;background:#f2f2f5;border:1px solid #d6d8de"></div>
<svg style="left:752px;top:1031px" width="16" height="16"><circle cx="6.5" cy="6.5" r="5.2" stroke="#1a1a1a" stroke-width="1.6" fill="none"/><path d="M10.3 10.3 L14.5 14.5" stroke="#1a1a1a" stroke-width="1.8"/></svg>
<div class="t" style="left:778px;top:1032px;font-size:13.5px;color:#5f5f5f;transform:scaleX(.93);transform-origin:0 0">Search</div>
<svg style="left:911px;top:1026px" width="42" height="26"><path d="M6 23 Q10 14 12 8 Q13 3 9.5 3 Q6 3 7.5 8 Q10 16 20 22 Q26 25 39 21" stroke="#3da82a" stroke-width="3.2" fill="none" stroke-linecap="round"/><circle cx="24" cy="11.5" r="8.5" fill="#3c8fd6"/><path d="M19 6 Q23 5 24 9 Q22 12 19 11 Z M25 12 Q29 11 30 15 Q27 19 25 17 Z" fill="#4aa53a"/></svg>
<svg style="left:973px;top:1026px" width="25" height="24"><rect x="6.5" y="0.5" width="17" height="15" rx="1" fill="#f4f4f4" stroke="#e0e0e0" stroke-width=".5"/><rect x="0.5" y="7" width="17" height="15.5" rx="1" fill="#1e1e1e"/><rect x="6.5" y="7" width="11" height="9" fill="#b8b8b8"/></svg>
<svg style="left:1017px;top:1026px" width="25" height="23"><path d="M0.5 3 Q0.5 1 2.5 1 H8.5 L11 3.5 H22 Q24 3.5 24 5.5 V20 Q24 22 22 22 H2.5 Q0.5 22 0.5 20 Z" fill="#f6c744"/><rect x="0.5" y="5.5" width="23.5" height="16.5" rx="1.5" fill="#fbd75b"/><rect x="5" y="15" width="15" height="7" rx="1.5" fill="#1479d4"/></svg>
<div class="a" style="left:1026px;top:1054px;width:6px;height:3px;border-radius:2px;background:#7a7a80"></div>
<svg style="left:1060.5px;top:1025.0px" width="25" height="25"><circle cx="12.5" cy="12.5" r="12" fill="#fcc934"/><path d="M12.5 12.5 L2.1 6.5 A12 12 0 0 1 22.9 6.5 Z" fill="#ea4335"/><path d="M12.5 12.5 L2.1 6.5 A12 12 0 0 0 12.5 24.5 Z" fill="#34a853"/><circle cx="12.5" cy="12.5" r="5.6" fill="#fff"/><circle cx="12.5" cy="12.5" r="4.3" fill="#3d7ce4"/></svg>
<svg style="left:1105px;top:1025px" width="25" height="25"><defs><linearGradient id="eg1" x1="0" y1="0" x2="1" y2="1"><stop offset="0" stop-color="#35c1f1"/><stop offset="1" stop-color="#1e8ee0"/></linearGradient><linearGradient id="eg2" x1="0" y1="0" x2="1" y2="0"><stop offset="0" stop-color="#35c1f1"/><stop offset="1" stop-color="#66eb6e"/></linearGradient></defs><circle cx="12.5" cy="12.5" r="12" fill="url(#eg1)"/><path d="M24.5 12.5 A12 12 0 0 0 3 5 Q8 2 14 4 Q21 7 20 13 Q17 16.5 13 15 Q9 13.5 10.5 11 Q7 13 9 17.5 Q12 22 19 22 Q24 19 24.5 12.5 Z" fill="url(#eg2)"/><path d="M1 13 Q1 22 9 24 Q5 19 8 13 Q10 9.5 14 10 Q10 7 5 9 Q1.5 10.5 1 13 Z" fill="#0c59a4"/><circle cx="14" cy="13" r="3" fill="#1b6fc4"/></svg>
<div class="a" style="left:1142px;top:1019px;width:38px;height:38px;border-radius:4px;background:rgba(255,255,255,.55)"></div>
<svg style="left:1147.5px;top:1025.0px" width="25" height="25"><circle cx="12.5" cy="12.5" r="12" fill="#fcc934"/><path d="M12.5 12.5 L2.1 6.5 A12 12 0 0 1 22.9 6.5 Z" fill="#ea4335"/><path d="M12.5 12.5 L2.1 6.5 A12 12 0 0 0 12.5 24.5 Z" fill="#34a853"/><circle cx="12.5" cy="12.5" r="5.6" fill="#fff"/><circle cx="12.5" cy="12.5" r="4.3" fill="#3d7ce4"/></svg>
<div class="a" style="left:1153px;top:1054px;width:16px;height:3px;border-radius:2px;background:#0067c0"></div>
<svg style="left:1193px;top:1026px" width="25" height="23"><rect x="6" y="0.5" width="18.5" height="22" rx="1.5" fill="#41a5ee"/><rect x="6" y="6" width="18.5" height="5.5" fill="#2b7cd3"/><rect x="6" y="11.5" width="18.5" height="5.5" fill="#185abd"/><rect x="6" y="17" width="18.5" height="5.5" rx="1" fill="#103f91"/><rect x="0.5" y="5" width="13" height="13" rx="1" fill="#185abd"/><text x="7" y="15.5" font-family="Liberation Sans" font-weight="bold" font-size="10.5" fill="#fff" text-anchor="middle">W</text></svg>
<div class="a" style="left:1202px;top:1054px;width:6px;height:3px;border-radius:2px;background:#7a7a80"></div>
<svg style="left:1652px;top:1034px" width="12" height="8"><path d="M1 7 L6 2 L11 7" stroke="#1a1a1a" stroke-width="1.4" fill="none"/></svg>
<svg style="left:1684px;top:1030px" width="13" height="17"><rect x="3.5" y="0.8" width="6" height="10" rx="3" stroke="#3b7de0" stroke-width="1.5" fill="none"/><path d="M1 8 Q1 13 6.5 13 Q12 13 12 8 M6.5 13 V16" stroke="#3b7de0" stroke-width="1.5" fill="none"/></svg>
<div class="t" style="left:1716px;top:1026px;font-size:10.5px;color:#1a1a1a">ENG</div>
<div class="t" style="left:1722px;top:1042px;font-size:10.5px;color:#1a1a1a">IN</div>
<svg style="left:1757px;top:1029px" width="18" height="18"><path d="M12 3 H1 V13 H12" stroke="#1a1a1a" stroke-width="1.2" fill="none"/><path d="M4 16.5 H9 M6.5 13 V16.5" stroke="#1a1a1a" stroke-width="1.2"/><rect x="12.5" y="1" width="4" height="5" rx="1" stroke="#1a1a1a" stroke-width="1.1" fill="none"/><path d="M14.5 6 V16.5" stroke="#1a1a1a" stroke-width="1.2"/></svg>
<svg style="left:1782px;top:1032px" width="16" height="13"><path d="M1 4.5 H3.5 L7 1.5 V11.5 L3.5 8.5 H1 Z" stroke="#1a1a1a" stroke-width="1.1" fill="none" stroke-linejoin="round"/><path d="M9.5 4 Q10.5 6.5 9.5 9 M11.8 2.5 Q13.5 6.5 11.8 10.5" stroke="#1a1a1a" stroke-width="1.1" fill="none"/><path d="M14 1.5 Q16 6.5 14 11.5" stroke="#9a9a9a" stroke-width="1" fill="none"/></svg>
<div class="t" style="left:1777px;top:1025px;width:100px;text-align:right;font-size:11.5px;color:#1a1a1a">11:50</div>
<div class="t" style="left:1777px;top:1041px;width:100px;text-align:right;font-size:11.5px;color:#1a1a1a">10-10-2025</div>
<svg style="left:1885px;top:1030px" width="16" height="17"><path d="M2 12 Q3.5 11 3.5 8 Q3.5 3 8 3 Q12.5 3 12.5 8 Q12.5 11 14 12 Z" fill="#1a1a1a"/><path d="M6 14 Q8 16.5 10 14" stroke="#1a1a1a" stroke-width="1.4" fill="none"/><path d="M5.5 6 H9 L5.5 10 H9" stroke="#fff" stroke-width="1" fill="none"/><path d="M11 0.8 H14.5 L11 4.5 H14.5" stroke="#1a1a1a" stroke-width="1" fill="none"/></svg>

</body></html>
